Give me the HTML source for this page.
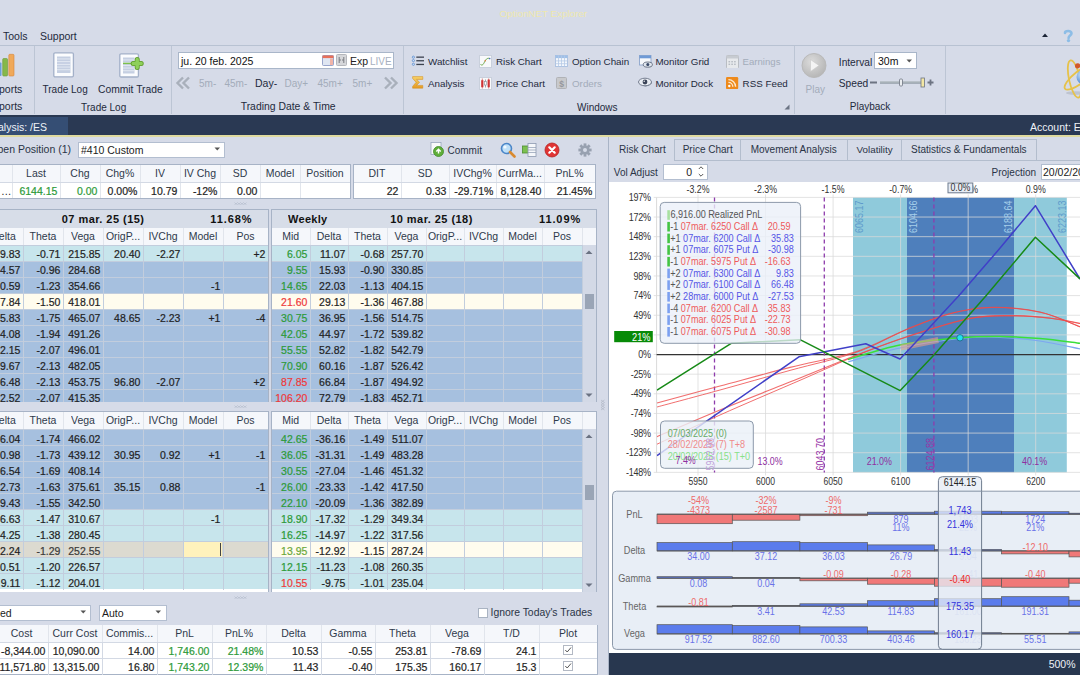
<!DOCTYPE html><html><head><meta charset="utf-8"><style>
html,body{margin:0;padding:0;}
body{width:1080px;height:675px;overflow:hidden;position:relative;background:#D6DBE8;font-family:"Liberation Sans", sans-serif;}
.t{position:absolute;white-space:nowrap;}
.s{-webkit-text-stroke:0.2px currentColor;}
.r{position:absolute;box-sizing:border-box;}
svg{position:absolute;}
</style></head><body>
<div class="t" style="top:8.53px;font-size:9.8px;line-height:10.947px;color:#EEE8AE;left:499.50px;">OptionNET Explorer</div>
<div class="t" style="top:31.30px;font-size:10.5px;line-height:11.729px;color:#1e2a3c;left:3.00px;">Tools</div>
<div class="t" style="top:31.30px;font-size:10.5px;line-height:11.729px;color:#1e2a3c;left:40.00px;">Support</div>
<svg style="left:1040px;top:31px" width="10" height="8"><path d="M2 6 L5 2.5 L8 6 Z" fill="#1b2436"/></svg>
<svg style="left:1061px;top:28px" width="14" height="16"><path d="M4 5 C4 2.5 10.5 2.2 10.5 5.2 C10.5 7.4 7.6 7.6 7.6 10" stroke="#8dbde6" stroke-width="2.6" fill="none" stroke-linecap="round"/><circle cx="7.5" cy="12.6" r="1.7" fill="#8dbde6"/></svg>
<div class="r" style="left:0px;top:45px;width:1080px;height:1px;background:#B8C2D2;"></div>
<div class="r" style="left:34px;top:46px;width:1px;height:68px;background:#BCC5D4;"></div>
<div class="r" style="left:171px;top:46px;width:1px;height:68px;background:#BCC5D4;"></div>
<div class="r" style="left:403px;top:46px;width:1px;height:68px;background:#BCC5D4;"></div>
<div class="r" style="left:794px;top:46px;width:1px;height:68px;background:#BCC5D4;"></div>
<div class="r" style="left:945px;top:46px;width:1px;height:68px;background:#BCC5D4;"></div>
<svg style="left:0px;top:52px" width="16" height="26"><rect x="-2" y="10.5" width="3.5" height="13.5" rx="1" fill="#6aa0d8"/><rect x="2.7" y="6.5" width="4.8" height="17.5" rx="1" fill="#86b84a" stroke="#6c9a36" stroke-width="0.6"/><rect x="8.8" y="2.3" width="5.2" height="21.7" rx="1" fill="#f0a95a" stroke="#d7863b" stroke-width="0.6"/></svg>
<div class="t" style="top:83.50px;font-size:10.5px;line-height:11.729px;color:#1e2a3c;left:-1.00px;">ports</div>
<div class="t" style="top:101.10px;font-size:10.5px;line-height:11.729px;color:#1e2a3c;left:-1.00px;">ports</div>
<svg style="left:53px;top:52px" width="22" height="26"><rect x="0.8" y="0.8" width="19.6" height="24" fill="#fbfcfe" stroke="#a3b0c8" stroke-width="1.3" rx="1.2"/><rect x="4" y="4.5" width="13.5" height="16.5" fill="#c5cfe2"/><rect x="4" y="6.5" width="13.5" height="0.9" fill="#e6ebf4"/><rect x="4" y="9.2" width="13.5" height="0.9" fill="#e6ebf4"/><rect x="4" y="11.9" width="13.5" height="0.9" fill="#e6ebf4"/><rect x="4" y="14.6" width="13.5" height="0.9" fill="#e6ebf4"/><rect x="4" y="17.3" width="13.5" height="0.9" fill="#e6ebf4"/></svg>
<svg style="left:119px;top:52.5px" width="28" height="26"><rect x="0.8" y="0.8" width="18.6" height="23.2" fill="#fbfcfe" stroke="#a3b0c8" stroke-width="1.3" rx="1.2"/><rect x="4" y="4.5" width="11.5" height="16" fill="#c5cfe2"/><rect x="4" y="6.5" width="11.5" height="0.9" fill="#e6ebf4"/><rect x="4" y="9.2" width="11.5" height="0.9" fill="#e6ebf4"/><rect x="4" y="11.9" width="11.5" height="0.9" fill="#e6ebf4"/><rect x="4" y="14.6" width="11.5" height="0.9" fill="#e6ebf4"/><rect x="4" y="17.3" width="11.5" height="0.9" fill="#e6ebf4"/><rect x="4" y="9.7" width="9" height="1.4" fill="#7cc04a"/><path d="M18.2 6.5 v8 M14.2 10.5 h8" stroke="#5e9a2a" stroke-width="5" stroke-linecap="round"/><path d="M18.2 6.5 v8 M14.2 10.5 h8" stroke="#8ed05a" stroke-width="3.4" stroke-linecap="round"/></svg>
<div class="t" style="top:84.25px;font-size:10px;line-height:11.170px;color:#1e2a3c;left:42.50px;">Trade Log</div>
<div class="t" style="top:83.98px;font-size:10.3px;line-height:11.505px;color:#1e2a3c;left:98.00px;">Commit Trade</div>
<div class="t" style="top:101.75px;font-size:10px;line-height:11.170px;color:#1e2a3c;left:81.00px;">Trade Log</div>
<div class="r" style="left:178px;top:52px;width:216px;height:17px;background:#fff;border:1px solid #A9B6C9;"></div>
<div class="t" style="top:55.80px;font-size:10.5px;line-height:11.729px;color:#111;left:181.00px;">ju. 20 feb. 2025</div>
<svg style="left:321.5px;top:54.5px" width="12" height="11"><rect x="0.5" y="0.5" width="11" height="10" rx="1" fill="#dfe6f2" stroke="#8d9cc6" stroke-width="0.9"/><rect x="0.5" y="0.5" width="11" height="2.6" fill="#e8705a"/><rect x="8" y="3.5" width="3" height="6.5" fill="#f0b4a8"/></svg>
<svg style="left:336px;top:54px" width="11" height="12"><rect x="0.5" y="0.5" width="10" height="11" rx="1" fill="#d6d7da" stroke="#b5b7bc"/><path d="M3.2 3v6 M7.8 3v6 M3.2 6h1.8 M7.8 6h-1.8" stroke="#7a7c82" stroke-width="1"/></svg>
<div class="t" style="top:55.80px;font-size:10.5px;line-height:11.729px;color:#222;left:350.00px;">Exp</div>
<div class="t" style="top:56.25px;font-size:10px;line-height:11.170px;color:#a7b0bf;left:370.00px;">LIVE</div>
<svg style="left:175px;top:76px" width="18" height="14"><path d="M8 1.5 L2.5 7 L8 12.5 M14 1.5 L8.5 7 L14 12.5" stroke="#a9b0bb" stroke-width="2.4" fill="none"/></svg>
<svg style="left:381px;top:76px" width="18" height="14"><path d="M4 1.5 L9.5 7 L4 12.5 M10 1.5 L15.5 7 L10 12.5" stroke="#a9b0bb" stroke-width="2.4" fill="none"/></svg>
<div class="t" style="top:78.25px;font-size:10px;line-height:11.170px;color:#a3acba;left:199.00px;">5m-</div>
<div class="t" style="top:78.25px;font-size:10px;line-height:11.170px;color:#a3acba;left:224.50px;">45m-</div>
<div class="t" style="top:77.80px;font-size:10.5px;line-height:11.729px;color:#1e2a3c;left:255.00px;">Day-</div>
<div class="t" style="top:78.25px;font-size:10px;line-height:11.170px;color:#a3acba;left:284.50px;">Day+</div>
<div class="t" style="top:78.25px;font-size:10px;line-height:11.170px;color:#a3acba;left:317.50px;">45m+</div>
<div class="t" style="top:78.25px;font-size:10px;line-height:11.170px;color:#a3acba;left:352.50px;">5m+</div>
<div class="t" style="top:100.89px;font-size:10.4px;line-height:11.617px;color:#1e2a3c;left:240.70px;">Trading Date &amp; Time</div>
<svg style="left:411px;top:55px" width="14" height="12"><circle cx="2.4" cy="2.2" r="1.1" fill="#cfe0f4" stroke="#5d8ed0" stroke-width="0.8"/><circle cx="2.4" cy="5.6" r="1.1" fill="#cfe0f4" stroke="#5d8ed0" stroke-width="0.8"/><circle cx="2.4" cy="9.3" r="1.1" fill="#cfe0f4" stroke="#5d8ed0" stroke-width="0.8"/><rect x="5.3" y="1.5" width="7.7" height="1.3" fill="#3c4350"/><rect x="5.3" y="5.1" width="7.7" height="1.3" fill="#3c4350"/><rect x="5.3" y="8.8" width="7.7" height="1.3" fill="#3c4350"/></svg>
<div class="t" style="top:56.93px;font-size:9.8px;line-height:10.947px;color:#1e2a3c;left:428.00px;">Watchlist</div>
<svg style="left:412px;top:76px" width="12" height="13"><defs><linearGradient id="sg" x1="0" y1="0" x2="0" y2="1"><stop offset="0" stop-color="#f7d36a"/><stop offset="1" stop-color="#e59a22"/></linearGradient></defs><path d="M0.6 0.6 H10.8 V3.4 H4.6 L7.6 6.3 L4.6 9.4 H10.8 V12.2 H0.6 V10.4 L4.1 6.3 L0.6 2.4 Z" fill="url(#sg)" stroke="#d08a1a" stroke-width="0.5"/></svg>
<div class="t" style="top:78.93px;font-size:9.8px;line-height:10.947px;color:#1e2a3c;left:428.00px;">Analysis</div>
<svg style="left:478.5px;top:54.5px" width="13" height="13"><rect x="0.5" y="0.5" width="12" height="12" fill="#f8f9fb" stroke="#c9d0dc"/><path d="M1.5 9.5 C3.5 11 4.5 9 5.5 7 S8 2.5 10.5 3.5" stroke="#6aa84a" stroke-width="1" fill="none"/><circle cx="6.3" cy="5.8" r="0.8" fill="#e0783a"/><circle cx="10.7" cy="3.6" r="0.8" fill="#4a70c8"/></svg>
<div class="t" style="top:56.93px;font-size:9.8px;line-height:10.947px;color:#1e2a3c;left:496.00px;">Risk Chart</div>
<svg style="left:478.5px;top:76.5px" width="13" height="13"><rect x="0.5" y="0.5" width="12" height="12" fill="#f8f9fb" stroke="#c9d0dc"/><rect x="2.2" y="3.2" width="2.2" height="7" fill="#d83a3a"/><rect x="8.6" y="2.6" width="2.2" height="7.6" fill="#d83a3a"/><path d="M3.3 1.5v10 M9.7 1.5v10" stroke="#c03030" stroke-width="0.6"/><path d="M6.5 2.5v8" stroke="#8a8f98" stroke-width="0.8"/><rect x="5.6" y="4.5" width="1.8" height="3.5" fill="#fff" stroke="#8a8f98" stroke-width="0.6"/></svg>
<div class="t" style="top:78.93px;font-size:9.8px;line-height:10.947px;color:#1e2a3c;left:496.00px;">Price Chart</div>
<svg style="left:554.5px;top:55px" width="13" height="12"><rect x="0.5" y="0.5" width="12" height="11" fill="#f4f7fc" stroke="#a9bfdf" stroke-width="0.9"/><rect x="0.5" y="0.5" width="12" height="2.6" fill="#9fc0e8"/><path d="M3.5 0.5v11" stroke="#b5c9e6" stroke-width="0.8"/><path d="M6.5 0.5v11" stroke="#b5c9e6" stroke-width="0.8"/><path d="M9.5 0.5v11" stroke="#b5c9e6" stroke-width="0.8"/><path d="M0.5 5.90h12" stroke="#b5c9e6" stroke-width="0.8"/><path d="M0.5 8.70h12" stroke="#b5c9e6" stroke-width="0.8"/></svg>
<div class="t" style="top:56.93px;font-size:9.8px;line-height:10.947px;color:#1e2a3c;left:572.00px;">Option Chain</div>
<svg style="left:555.5px;top:77px" width="11" height="12"><rect x="0.5" y="0.5" width="10" height="11" rx="1" fill="#c8c9cc" stroke="#b0b2b6"/><text x="5.5" y="9.5" font-size="8.5" font-weight="bold" text-anchor="middle" fill="#95979c" font-family="Liberation Sans">$</text></svg>
<div class="t" style="top:78.93px;font-size:9.8px;line-height:10.947px;color:#a3acba;left:572.00px;">Orders</div>
<svg style="left:638.5px;top:55px" width="14" height="13"><rect x="0.5" y="0.5" width="11.5" height="9.5" fill="#f6f8fb" stroke="#8ea6cc" stroke-width="0.9"/><rect x="0.5" y="0.5" width="11.5" height="2.8" fill="#6f9ad6"/><ellipse cx="8.8" cy="9.6" rx="4.6" ry="2.6" fill="#dfe5ee" stroke="#4f596c" stroke-width="0.8"/><circle cx="8.8" cy="9.6" r="1.5" fill="#3a4a68"/></svg>
<svg style="left:638.5px;top:78px" width="14" height="10"><path d="M0.8 5 Q6.5 -1 12.8 5 Q6.5 11 0.8 5 Z" fill="#e9edf3" stroke="#6a7384" stroke-width="0.8"/><path d="M1.5 4 Q6.5 -0.5 12 4" stroke="#e0a050" stroke-width="1" fill="none"/><circle cx="6.8" cy="5" r="2.5" fill="#5a7fae"/><circle cx="6.8" cy="5" r="1.2" fill="#1e2a40"/></svg>
<div class="t" style="top:56.93px;font-size:9.8px;line-height:10.947px;color:#1e2a3c;left:655.40px;">Monitor Grid</div>
<svg style="left:638px;top:77px" width="15" height="10"><ellipse cx="7" cy="5" rx="6.5" ry="3.8" fill="#e8ecf2" stroke="#6a7384" stroke-width="0.9"/><circle cx="7" cy="5" r="2.4" fill="#3b4458"/><circle cx="6.2" cy="4.2" r="0.7" fill="#fff"/></svg>
<div class="t" style="top:78.93px;font-size:9.8px;line-height:10.947px;color:#1e2a3c;left:655.40px;">Monitor Dock</div>
<svg style="left:726px;top:54.5px" width="13" height="13"><rect x="0.5" y="0.5" width="12" height="13" rx="1" fill="#e7e9ec" stroke="#b9bdc3"/><rect x="0.5" y="0.5" width="12" height="3" fill="#c7cbd1"/><rect x="2.5" y="6.0" width="1.6" height="1.4" fill="#b7bcc4"/><rect x="2.5" y="8.6" width="1.6" height="1.4" fill="#b7bcc4"/><rect x="5.3" y="6.0" width="1.6" height="1.4" fill="#b7bcc4"/><rect x="5.3" y="8.6" width="1.6" height="1.4" fill="#b7bcc4"/><rect x="8.1" y="6.0" width="1.6" height="1.4" fill="#b7bcc4"/><rect x="8.1" y="8.6" width="1.6" height="1.4" fill="#b7bcc4"/></svg>
<div class="t" style="top:57.11px;font-size:9.6px;line-height:10.723px;color:#a3acba;left:742.60px;">Earnings</div>
<svg style="left:726px;top:76.8px" width="12.5" height="12.5"><rect x="0" y="0" width="12.2" height="12.2" rx="1.2" fill="#ee8a1c"/><circle cx="3.3" cy="9" r="1.2" fill="#fff"/><path d="M2.4 5.4 A4.4 4.4 0 0 1 6.8 9.8 M2.4 2.6 A7.2 7.2 0 0 1 9.6 9.8" stroke="#fde8cc" stroke-width="1.4" fill="none"/></svg>
<div class="t" style="top:78.93px;font-size:9.8px;line-height:10.947px;color:#1e2a3c;left:742.60px;">RSS Feed</div>
<div class="t" style="top:101.75px;font-size:10px;line-height:11.170px;color:#1e2a3c;left:577.00px;">Windows</div>
<svg style="left:784px;top:104px" width="6" height="6"><path d="M5.5 0.5 V5.5 H0.5 Z" fill="#6c7584"/></svg>
<svg style="left:800px;top:52px" width="28" height="28"><defs><radialGradient id="pg" cx="0.4" cy="0.35" r="0.7"><stop offset="0" stop-color="#dcdcdc"/><stop offset="1" stop-color="#b4b4b4"/></radialGradient></defs><circle cx="14" cy="13.5" r="12" fill="url(#pg)" stroke="#b9b9b9"/><path d="M10.5 7.5 L19 13.5 L10.5 19.5 Z" fill="#f4f4f4" stroke="#c8c8c8" stroke-width="0.6"/></svg>
<div class="t" style="top:83.75px;font-size:10px;line-height:11.170px;color:#a3acba;left:805.50px;">Play</div>
<div class="t" style="top:56.57px;font-size:10.2px;line-height:11.393px;color:#1e2a3c;left:838.80px;">Interval</div>
<div class="r" style="left:874px;top:52px;width:43px;height:17px;background:#fff;border:1px solid #A9B6C9;"></div>
<div class="t" style="top:56.30px;font-size:10.5px;line-height:11.729px;color:#111;left:878.00px;">30m</div>
<svg style="left:906px;top:58.5px" width="7" height="5"><path d="M0.5 0.5 H6 L3.25 3.5 Z" fill="#555"/></svg>
<div class="t" style="top:78.07px;font-size:10.2px;line-height:11.393px;color:#1e2a3c;left:838.80px;">Speed</div>
<svg style="left:868px;top:77px" width="70" height="11"><rect x="2" y="4.5" width="7" height="2" fill="#6d7482"/><rect x="12" y="4.5" width="44" height="2.2" fill="#8f9aa4"/><rect x="12" y="4.5" width="44" height="1" fill="#c0c8cc"/><rect x="31.5" y="2" width="3" height="7" rx="1" fill="#e9ecef" stroke="#6d7482" stroke-width="0.8"/><rect x="53" y="1" width="3.5" height="9" fill="#f3e7a4" stroke="#6d7482" stroke-width="0.8"/><path d="M59.5 5.5h6 M62.5 2.5v6" stroke="#6d7482" stroke-width="1.8"/></svg>
<div class="t" style="top:101.35px;font-size:10px;line-height:11.170px;color:#1e2a3c;left:849.80px;">Playback</div>
<svg style="left:1058px;top:55px" width="22" height="48"><defs><radialGradient id="ab" cx="0.35" cy="0.35" r="0.7"><stop offset="0" stop-color="#cfe6fb"/><stop offset="1" stop-color="#3a7cd0"/></radialGradient></defs><ellipse cx="17" cy="38" rx="9" ry="1.8" fill="#aeb4c0" opacity="0.6"/><ellipse cx="16.5" cy="24" rx="5.5" ry="19" transform="rotate(-12 16.5 24)" fill="none" stroke="#e6c24a" stroke-width="1.8"/><ellipse cx="22" cy="22" rx="19" ry="6" transform="rotate(-38 22 22)" fill="none" stroke="#e6c24a" stroke-width="1.8"/><circle cx="26" cy="22" r="7.5" fill="url(#ab)"/><circle cx="19.6" cy="10.8" r="2.6" fill="#d2582a"/></svg>
<div class="r" style="left:0px;top:115px;width:1080px;height:20px;background:#2A3953;"></div>
<div class="r" style="left:0px;top:117px;width:68px;height:18px;background:#354E74;"></div>
<div class="t" style="top:121.50px;font-size:10.5px;line-height:11.729px;color:#eef2f8;left:-2.00px;">alysis: /ES</div>
<div class="t" style="top:121.50px;font-size:10.5px;line-height:11.729px;color:#eef2f8;left:1030.00px;">Account: E</div>
<div class="r" style="left:0px;top:135px;width:1080px;height:2px;background:#DFDA9F;"></div>
<div class="t" style="top:144.10px;font-size:10.5px;line-height:11.729px;color:#2a3446;left:-49.00px;width:120px;text-align:right;">Open Position (1)</div>
<div class="r" style="left:78px;top:142px;width:147px;height:16px;background:#fff;border:1px solid #B3BED0;"></div>
<div class="t" style="top:144.80px;font-size:10.5px;line-height:11.729px;color:#1b1b1b;left:81.00px;">#410 Custom</div>
<svg style="left:214px;top:147px" width="7" height="5"><path d="M0.5 0.5 H6 L3.25 3.5 Z" fill="#555"/></svg>
<svg style="left:430px;top:142px" width="15" height="15"><rect x="1" y="0.5" width="10" height="12" fill="#f8f9fb" stroke="#9aa7bd" stroke-width="0.8"/><circle cx="8.5" cy="9.5" r="5" fill="#5fae3a" stroke="#3e8a26" stroke-width="0.8"/><path d="M6.3 9.5 L8.5 7.3 L10.7 9.5 M8.5 7.5 v4" stroke="#fff" stroke-width="1.4" fill="none"/></svg>
<div class="t" style="top:145.25px;font-size:10px;line-height:11.170px;color:#2a3446;left:447.50px;">Commit</div>
<svg style="left:500px;top:142px" width="16" height="16"><circle cx="6.5" cy="6.5" r="5" fill="#bfe0f8" stroke="#4b86c8" stroke-width="1.6"/><circle cx="5" cy="5" r="1.6" fill="#fff" opacity="0.8"/><path d="M10 10 L14.5 14.5" stroke="#d98a30" stroke-width="2.6" stroke-linecap="round"/></svg>
<svg style="left:522px;top:143px" width="15" height="14"><rect x="0.5" y="3" width="6" height="7" fill="#7cc050" stroke="#4d8f2e" stroke-width="0.8"/><rect x="6" y="0.5" width="8" height="13" fill="#f5f7fa" stroke="#8d9ab0" stroke-width="0.8"/><path d="M6 4.5h8 M6 7h8 M6 9.5h8" stroke="#8d9ab0" stroke-width="0.7"/></svg>
<svg style="left:544px;top:142px" width="16" height="16"><circle cx="8" cy="8" r="7" fill="#e03434" stroke="#b52222" stroke-width="0.8"/><path d="M5.3 5.3 L10.7 10.7 M10.7 5.3 L5.3 10.7" stroke="#fff" stroke-width="2.2" stroke-linecap="round"/></svg>
<svg style="left:578px;top:143px" width="14" height="14"><g transform="translate(7 7)"><rect x="-1.4" y="-6.6" width="2.8" height="3" fill="#98a1b0" transform="rotate(0)"/><rect x="-1.4" y="-6.6" width="2.8" height="3" fill="#98a1b0" transform="rotate(45)"/><rect x="-1.4" y="-6.6" width="2.8" height="3" fill="#98a1b0" transform="rotate(90)"/><rect x="-1.4" y="-6.6" width="2.8" height="3" fill="#98a1b0" transform="rotate(135)"/><rect x="-1.4" y="-6.6" width="2.8" height="3" fill="#98a1b0" transform="rotate(180)"/><rect x="-1.4" y="-6.6" width="2.8" height="3" fill="#98a1b0" transform="rotate(225)"/><rect x="-1.4" y="-6.6" width="2.8" height="3" fill="#98a1b0" transform="rotate(270)"/><rect x="-1.4" y="-6.6" width="2.8" height="3" fill="#98a1b0" transform="rotate(315)"/><circle r="4.6" fill="#98a1b0"/><circle r="2" fill="#d6dbe8"/></g></svg>
<div class="r" style="left:-1px;top:164px;width:352px;height:35px;background:#fff;border:1px solid #A7B3C6;"></div>
<div class="r" style="left:0px;top:165px;width:350px;height:17px;background:#F5F7FB;"></div>
<div class="t" style="top:168.00px;font-size:10.5px;line-height:11.729px;color:#2f3a4c;left:2.00px;width:68px;text-align:center;transform:scaleY(1.1);transform-origin:0 9.50px;">Last</div>
<div class="t" style="top:168.00px;font-size:10.5px;line-height:11.729px;color:#2f3a4c;left:50.00px;width:60px;text-align:center;transform:scaleY(1.1);transform-origin:0 9.50px;">Chg</div>
<div class="t" style="top:168.00px;font-size:10.5px;line-height:11.729px;color:#2f3a4c;left:90.00px;width:60px;text-align:center;transform:scaleY(1.1);transform-origin:0 9.50px;">Chg%</div>
<div class="t" style="top:168.00px;font-size:10.5px;line-height:11.729px;color:#2f3a4c;left:130.00px;width:60px;text-align:center;transform:scaleY(1.1);transform-origin:0 9.50px;">IV</div>
<div class="t" style="top:168.00px;font-size:10.5px;line-height:11.729px;color:#2f3a4c;left:170.00px;width:60px;text-align:center;transform:scaleY(1.1);transform-origin:0 9.50px;">IV Chg</div>
<div class="t" style="top:168.00px;font-size:10.5px;line-height:11.729px;color:#2f3a4c;left:210.00px;width:60px;text-align:center;transform:scaleY(1.1);transform-origin:0 9.50px;">SD</div>
<div class="t" style="top:168.00px;font-size:10.5px;line-height:11.729px;color:#2f3a4c;left:250.00px;width:60px;text-align:center;transform:scaleY(1.1);transform-origin:0 9.50px;">Model</div>
<div class="t" style="top:168.00px;font-size:10.5px;line-height:11.729px;color:#2f3a4c;left:290.00px;width:70px;text-align:center;transform:scaleY(1.1);transform-origin:0 9.50px;">Position</div>
<div class="r" style="left:12px;top:165px;width:1px;height:17px;background:#E1E5EC;"></div>
<div class="r" style="left:60px;top:165px;width:1px;height:17px;background:#E1E5EC;"></div>
<div class="r" style="left:100px;top:165px;width:1px;height:17px;background:#E1E5EC;"></div>
<div class="r" style="left:140px;top:165px;width:1px;height:17px;background:#E1E5EC;"></div>
<div class="r" style="left:180px;top:165px;width:1px;height:17px;background:#E1E5EC;"></div>
<div class="r" style="left:220px;top:165px;width:1px;height:17px;background:#E1E5EC;"></div>
<div class="r" style="left:260px;top:165px;width:1px;height:17px;background:#E1E5EC;"></div>
<div class="r" style="left:300px;top:165px;width:1px;height:17px;background:#E1E5EC;"></div>
<div class="r" style="left:0px;top:182px;width:350px;height:1px;background:#D3D9E4;"></div>
<div class="r" style="left:12px;top:183px;width:1px;height:15px;background:#E1E5EC;"></div>
<div class="r" style="left:60px;top:183px;width:1px;height:15px;background:#E1E5EC;"></div>
<div class="r" style="left:100px;top:183px;width:1px;height:15px;background:#E1E5EC;"></div>
<div class="r" style="left:140px;top:183px;width:1px;height:15px;background:#E1E5EC;"></div>
<div class="r" style="left:180px;top:183px;width:1px;height:15px;background:#E1E5EC;"></div>
<div class="r" style="left:220px;top:183px;width:1px;height:15px;background:#E1E5EC;"></div>
<div class="r" style="left:260px;top:183px;width:1px;height:15px;background:#E1E5EC;"></div>
<div class="r" style="left:300px;top:183px;width:1px;height:15px;background:#E1E5EC;"></div>
<div class="t" style="top:185.70px;font-size:10.5px;line-height:11.729px;color:#1f1f24;left:1.00px;">…</div>
<div class="t s" style="top:186.30px;font-size:10.5px;line-height:11.729px;color:#2c9a38;left:-42.60px;width:100px;text-align:right;transform:scaleY(1.12);transform-origin:0 9.50px;">6144.15</div>
<div class="t s" style="top:186.30px;font-size:10.5px;line-height:11.729px;color:#2c9a38;left:-2.60px;width:100px;text-align:right;transform:scaleY(1.12);transform-origin:0 9.50px;">0.00</div>
<div class="t s" style="top:186.30px;font-size:10.5px;line-height:11.729px;color:#1f1f24;left:37.40px;width:100px;text-align:right;transform:scaleY(1.12);transform-origin:0 9.50px;">0.00%</div>
<div class="t s" style="top:186.30px;font-size:10.5px;line-height:11.729px;color:#1f1f24;left:77.40px;width:100px;text-align:right;transform:scaleY(1.12);transform-origin:0 9.50px;">10.79</div>
<div class="t s" style="top:186.30px;font-size:10.5px;line-height:11.729px;color:#1f1f24;left:117.40px;width:100px;text-align:right;transform:scaleY(1.12);transform-origin:0 9.50px;">-12%</div>
<div class="t s" style="top:186.30px;font-size:10.5px;line-height:11.729px;color:#1f1f24;left:157.40px;width:100px;text-align:right;transform:scaleY(1.12);transform-origin:0 9.50px;">0.00</div>
<div class="r" style="left:353px;top:164px;width:243px;height:35px;background:#fff;border:1px solid #A7B3C6;"></div>
<div class="r" style="left:354px;top:165px;width:241px;height:17px;background:#F5F7FB;"></div>
<div class="t" style="top:168.00px;font-size:10.5px;line-height:11.729px;color:#2f3a4c;left:343.00px;width:68px;text-align:center;transform:scaleY(1.1);transform-origin:0 9.50px;">DIT</div>
<div class="t" style="top:168.00px;font-size:10.5px;line-height:11.729px;color:#2f3a4c;left:391.00px;width:68px;text-align:center;transform:scaleY(1.1);transform-origin:0 9.50px;">SD</div>
<div class="t" style="top:168.00px;font-size:10.5px;line-height:11.729px;color:#2f3a4c;left:439.00px;width:67px;text-align:center;transform:scaleY(1.1);transform-origin:0 9.50px;">IVChg%</div>
<div class="t" style="top:168.00px;font-size:10.5px;line-height:11.729px;color:#2f3a4c;left:486.00px;width:68px;text-align:center;transform:scaleY(1.1);transform-origin:0 9.50px;">CurrMa...</div>
<div class="t" style="top:168.00px;font-size:10.5px;line-height:11.729px;color:#2f3a4c;left:534.00px;width:71px;text-align:center;transform:scaleY(1.1);transform-origin:0 9.50px;">PnL%</div>
<div class="r" style="left:401px;top:165px;width:1px;height:17px;background:#E1E5EC;"></div>
<div class="r" style="left:449px;top:165px;width:1px;height:17px;background:#E1E5EC;"></div>
<div class="r" style="left:496px;top:165px;width:1px;height:17px;background:#E1E5EC;"></div>
<div class="r" style="left:544px;top:165px;width:1px;height:17px;background:#E1E5EC;"></div>
<div class="r" style="left:354px;top:182px;width:241px;height:1px;background:#D3D9E4;"></div>
<div class="r" style="left:401px;top:183px;width:1px;height:15px;background:#E1E5EC;"></div>
<div class="r" style="left:449px;top:183px;width:1px;height:15px;background:#E1E5EC;"></div>
<div class="r" style="left:496px;top:183px;width:1px;height:15px;background:#E1E5EC;"></div>
<div class="r" style="left:544px;top:183px;width:1px;height:15px;background:#E1E5EC;"></div>
<div class="t s" style="top:186.30px;font-size:10.5px;line-height:11.729px;color:#1f1f24;left:298.40px;width:100px;text-align:right;transform:scaleY(1.12);transform-origin:0 9.50px;">22</div>
<div class="t s" style="top:186.30px;font-size:10.5px;line-height:11.729px;color:#1f1f24;left:346.40px;width:100px;text-align:right;transform:scaleY(1.12);transform-origin:0 9.50px;">0.33</div>
<div class="t s" style="top:186.30px;font-size:10.5px;line-height:11.729px;color:#1f1f24;left:393.40px;width:100px;text-align:right;transform:scaleY(1.12);transform-origin:0 9.50px;">-29.71%</div>
<div class="t s" style="top:186.30px;font-size:10.5px;line-height:11.729px;color:#1f1f24;left:441.40px;width:100px;text-align:right;transform:scaleY(1.12);transform-origin:0 9.50px;">8,128.40</div>
<div class="t s" style="top:186.30px;font-size:10.5px;line-height:11.729px;color:#1f1f24;left:492.40px;width:100px;text-align:right;transform:scaleY(1.12);transform-origin:0 9.50px;">21.45%</div>
<svg style="left:234px;top:202px" width="14" height="4"><path d="M0.5 0.5 L2 2 L3.5 0.5 L5 2 L6.5 0.5 L8 2 L9.5 0.5 L11 2 L12.5 0.5 M0.5 3 L2 1.5 L3.5 3 L5 1.5 L6.5 3 L8 1.5 L9.5 3 L11 1.5 L12.5 3" stroke="#b4bccb" stroke-width="0.6" fill="none"/></svg>
<div class="r" style="left:-1px;top:208.5px;width:270px;height:193.5px;border:1px solid #A7B3C6;background:#fff;"></div>
<div class="r" style="left:271px;top:208.5px;width:326px;height:193.5px;border:1px solid #A7B3C6;background:#fff;"></div>
<div class="r" style="left:0px;top:209.5px;width:268px;height:18px;background:#D7DDE8;"></div>
<div class="r" style="left:272px;top:209.5px;width:324px;height:18px;background:#D7DDE8;"></div>
<div class="t" style="top:213.04px;font-size:11px;line-height:12.287px;color:#111;font-weight:bold;left:61.80px;transform:scaleY(1.05);transform-origin:0 9.96px;letter-spacing:0.45px;">07 mar. 25 (15)</div>
<div class="t" style="top:213.04px;font-size:11px;line-height:12.287px;color:#111;font-weight:bold;left:172.40px;width:80px;text-align:right;transform:scaleY(1.05);transform-origin:0 9.96px;letter-spacing:0.9px;">11.68%</div>
<div class="t" style="top:213.04px;font-size:11px;line-height:12.287px;color:#111;font-weight:bold;left:288.00px;transform:scaleY(1.05);transform-origin:0 9.96px;letter-spacing:0.3px;">Weekly</div>
<div class="t" style="top:213.04px;font-size:11px;line-height:12.287px;color:#111;font-weight:bold;left:390.20px;transform:scaleY(1.05);transform-origin:0 9.96px;letter-spacing:0.45px;">10 mar. 25 (18)</div>
<div class="t" style="top:213.04px;font-size:11px;line-height:12.287px;color:#111;font-weight:bold;left:501.10px;width:80px;text-align:right;transform:scaleY(1.05);transform-origin:0 9.96px;letter-spacing:0.9px;">11.09%</div>
<div class="r" style="left:0px;top:227.5px;width:268px;height:1px;background:#C3CCDA;"></div>
<div class="r" style="left:272px;top:227.5px;width:324px;height:1px;background:#C3CCDA;"></div>
<div class="r" style="left:0px;top:227.5px;width:268px;height:17.0px;background:#F5F7FB;"></div>
<div class="t" style="top:230.50px;font-size:10.5px;line-height:11.729px;color:#2f3a4c;left:-26.00px;width:59px;text-align:center;transform:scaleY(1.1);transform-origin:0 9.50px;">Delta</div>
<div class="t" style="top:230.50px;font-size:10.5px;line-height:11.729px;color:#2f3a4c;left:13.00px;width:60px;text-align:center;transform:scaleY(1.1);transform-origin:0 9.50px;">Theta</div>
<div class="t" style="top:230.50px;font-size:10.5px;line-height:11.729px;color:#2f3a4c;left:53.00px;width:60px;text-align:center;transform:scaleY(1.1);transform-origin:0 9.50px;">Vega</div>
<div class="t" style="top:230.50px;font-size:10.5px;line-height:11.729px;color:#2f3a4c;left:93.00px;width:60px;text-align:center;transform:scaleY(1.1);transform-origin:0 9.50px;">OrigP...</div>
<div class="t" style="top:230.50px;font-size:10.5px;line-height:11.729px;color:#2f3a4c;left:133.00px;width:60px;text-align:center;transform:scaleY(1.1);transform-origin:0 9.50px;">IVChg</div>
<div class="t" style="top:230.50px;font-size:10.5px;line-height:11.729px;color:#2f3a4c;left:173.00px;width:60px;text-align:center;transform:scaleY(1.1);transform-origin:0 9.50px;">Model</div>
<div class="t" style="top:230.50px;font-size:10.5px;line-height:11.729px;color:#2f3a4c;left:213.00px;width:65px;text-align:center;transform:scaleY(1.1);transform-origin:0 9.50px;">Pos</div>
<div class="r" style="left:23px;top:227.5px;width:1px;height:17.0px;background:#E1E5EC;"></div>
<div class="r" style="left:63px;top:227.5px;width:1px;height:17.0px;background:#E1E5EC;"></div>
<div class="r" style="left:103px;top:227.5px;width:1px;height:17.0px;background:#E1E5EC;"></div>
<div class="r" style="left:143px;top:227.5px;width:1px;height:17.0px;background:#E1E5EC;"></div>
<div class="r" style="left:183px;top:227.5px;width:1px;height:17.0px;background:#E1E5EC;"></div>
<div class="r" style="left:223px;top:227.5px;width:1px;height:17.0px;background:#E1E5EC;"></div>
<div class="r" style="left:272px;top:227.5px;width:324px;height:17.0px;background:#F5F7FB;"></div>
<div class="t" style="top:230.50px;font-size:10.5px;line-height:11.729px;color:#2f3a4c;left:261.40px;width:58.60000000000002px;text-align:center;transform:scaleY(1.1);transform-origin:0 9.50px;">Mid</div>
<div class="t" style="top:230.50px;font-size:10.5px;line-height:11.729px;color:#2f3a4c;left:300.00px;width:58px;text-align:center;transform:scaleY(1.1);transform-origin:0 9.50px;">Delta</div>
<div class="t" style="top:230.50px;font-size:10.5px;line-height:11.729px;color:#2f3a4c;left:338.00px;width:59px;text-align:center;transform:scaleY(1.1);transform-origin:0 9.50px;">Theta</div>
<div class="t" style="top:230.50px;font-size:10.5px;line-height:11.729px;color:#2f3a4c;left:377.00px;width:59px;text-align:center;transform:scaleY(1.1);transform-origin:0 9.50px;">Vega</div>
<div class="t" style="top:230.50px;font-size:10.5px;line-height:11.729px;color:#2f3a4c;left:416.00px;width:58px;text-align:center;transform:scaleY(1.1);transform-origin:0 9.50px;">OrigP...</div>
<div class="t" style="top:230.50px;font-size:10.5px;line-height:11.729px;color:#2f3a4c;left:454.00px;width:59px;text-align:center;transform:scaleY(1.1);transform-origin:0 9.50px;">IVChg</div>
<div class="t" style="top:230.50px;font-size:10.5px;line-height:11.729px;color:#2f3a4c;left:493.00px;width:59px;text-align:center;transform:scaleY(1.1);transform-origin:0 9.50px;">Model</div>
<div class="t" style="top:230.50px;font-size:10.5px;line-height:11.729px;color:#2f3a4c;left:532.00px;width:60px;text-align:center;transform:scaleY(1.1);transform-origin:0 9.50px;">Pos</div>
<div class="r" style="left:310px;top:227.5px;width:1px;height:17.0px;background:#E1E5EC;"></div>
<div class="r" style="left:348px;top:227.5px;width:1px;height:17.0px;background:#E1E5EC;"></div>
<div class="r" style="left:387px;top:227.5px;width:1px;height:17.0px;background:#E1E5EC;"></div>
<div class="r" style="left:426px;top:227.5px;width:1px;height:17.0px;background:#E1E5EC;"></div>
<div class="r" style="left:464px;top:227.5px;width:1px;height:17.0px;background:#E1E5EC;"></div>
<div class="r" style="left:503px;top:227.5px;width:1px;height:17.0px;background:#E1E5EC;"></div>
<div class="r" style="left:542px;top:227.5px;width:1px;height:17.0px;background:#E1E5EC;"></div>
<div class="r" style="left:582px;top:227.5px;width:1px;height:17.0px;background:#E1E5EC;"></div>
<div class="r" style="left:0px;top:244.5px;width:268px;height:16px;background:#C7E5EC;border-top:1px solid #C2CDDD;"></div>
<div class="r" style="left:272px;top:244.5px;width:310.2px;height:16px;background:#C7E5EC;border-top:1px solid #C2CDDD;"></div>
<div class="r" style="left:0px;top:260.5px;width:268px;height:16px;background:#A6C0DF;border-top:1px solid #C2CDDD;"></div>
<div class="r" style="left:272px;top:260.5px;width:310.2px;height:16px;background:#A6C0DF;border-top:1px solid #C2CDDD;"></div>
<div class="r" style="left:0px;top:276.5px;width:268px;height:16px;background:#A6C0DF;border-top:1px solid #C2CDDD;"></div>
<div class="r" style="left:272px;top:276.5px;width:310.2px;height:16px;background:#A6C0DF;border-top:1px solid #C2CDDD;"></div>
<div class="r" style="left:0px;top:292.5px;width:268px;height:16px;background:#FFFCEE;border-top:1px solid #C2CDDD;"></div>
<div class="r" style="left:272px;top:292.5px;width:310.2px;height:16px;background:#FFFCEE;border-top:1px solid #C2CDDD;"></div>
<div class="r" style="left:0px;top:308.5px;width:268px;height:16px;background:#A6C0DF;border-top:1px solid #C2CDDD;"></div>
<div class="r" style="left:272px;top:308.5px;width:310.2px;height:16px;background:#A6C0DF;border-top:1px solid #C2CDDD;"></div>
<div class="r" style="left:0px;top:324.5px;width:268px;height:16px;background:#A6C0DF;border-top:1px solid #C2CDDD;"></div>
<div class="r" style="left:272px;top:324.5px;width:310.2px;height:16px;background:#A6C0DF;border-top:1px solid #C2CDDD;"></div>
<div class="r" style="left:0px;top:340.5px;width:268px;height:16px;background:#A6C0DF;border-top:1px solid #C2CDDD;"></div>
<div class="r" style="left:272px;top:340.5px;width:310.2px;height:16px;background:#A6C0DF;border-top:1px solid #C2CDDD;"></div>
<div class="r" style="left:0px;top:356.5px;width:268px;height:16px;background:#A6C0DF;border-top:1px solid #C2CDDD;"></div>
<div class="r" style="left:272px;top:356.5px;width:310.2px;height:16px;background:#A6C0DF;border-top:1px solid #C2CDDD;"></div>
<div class="r" style="left:0px;top:372.5px;width:268px;height:16px;background:#A6C0DF;border-top:1px solid #C2CDDD;"></div>
<div class="r" style="left:272px;top:372.5px;width:310.2px;height:16px;background:#A6C0DF;border-top:1px solid #C2CDDD;"></div>
<div class="r" style="left:0px;top:388.5px;width:268px;height:13.5px;background:#A6C0DF;border-top:1px solid #C2CDDD;"></div>
<div class="r" style="left:272px;top:388.5px;width:310.2px;height:13.5px;background:#A6C0DF;border-top:1px solid #C2CDDD;"></div>
<div class="r" style="left:23px;top:244.5px;width:1px;height:157.5px;background:#C2CDDD;"></div>
<div class="r" style="left:63px;top:244.5px;width:1px;height:157.5px;background:#C2CDDD;"></div>
<div class="r" style="left:103px;top:244.5px;width:1px;height:157.5px;background:#C2CDDD;"></div>
<div class="r" style="left:143px;top:244.5px;width:1px;height:157.5px;background:#C2CDDD;"></div>
<div class="r" style="left:183px;top:244.5px;width:1px;height:157.5px;background:#C2CDDD;"></div>
<div class="r" style="left:223px;top:244.5px;width:1px;height:157.5px;background:#C2CDDD;"></div>
<div class="r" style="left:310px;top:244.5px;width:1px;height:157.5px;background:#C2CDDD;"></div>
<div class="r" style="left:348px;top:244.5px;width:1px;height:157.5px;background:#C2CDDD;"></div>
<div class="r" style="left:387px;top:244.5px;width:1px;height:157.5px;background:#C2CDDD;"></div>
<div class="r" style="left:426px;top:244.5px;width:1px;height:157.5px;background:#C2CDDD;"></div>
<div class="r" style="left:464px;top:244.5px;width:1px;height:157.5px;background:#C2CDDD;"></div>
<div class="r" style="left:503px;top:244.5px;width:1px;height:157.5px;background:#C2CDDD;"></div>
<div class="r" style="left:542px;top:244.5px;width:1px;height:157.5px;background:#C2CDDD;"></div>
<div class="r" style="left:582px;top:244.5px;width:1px;height:157.5px;background:#C2CDDD;"></div>
<div class="r" style="left:583px;top:244.5px;width:13px;height:157.5px;background:#D3D9E6;"></div>
<svg style="left:585px;top:249.5px" width="8" height="5"><path d="M0.5 4 L4 0.5 L7.5 4 Z" fill="#6a7282"/></svg>
<svg style="left:585px;top:393px" width="8" height="5"><path d="M0.5 0.5 L4 4 L7.5 0.5 Z" fill="#6a7282"/></svg>
<div class="r" style="left:584.5px;top:294px;width:9px;height:15px;background:#9AA5B6;"></div>
<div class="t s" style="top:248.80px;font-size:10.5px;line-height:11.729px;color:#1f1f24;left:-79.60px;width:100px;text-align:right;transform:scaleY(1.12);transform-origin:0 9.50px;">9.83</div>
<div class="t s" style="top:248.80px;font-size:10.5px;line-height:11.729px;color:#1f1f24;left:-39.60px;width:100px;text-align:right;transform:scaleY(1.12);transform-origin:0 9.50px;">-0.71</div>
<div class="t s" style="top:248.80px;font-size:10.5px;line-height:11.729px;color:#1f1f24;left:0.40px;width:100px;text-align:right;transform:scaleY(1.12);transform-origin:0 9.50px;">215.85</div>
<div class="t s" style="top:248.80px;font-size:10.5px;line-height:11.729px;color:#1f1f24;left:40.40px;width:100px;text-align:right;transform:scaleY(1.12);transform-origin:0 9.50px;">20.40</div>
<div class="t s" style="top:248.80px;font-size:10.5px;line-height:11.729px;color:#1f1f24;left:80.40px;width:100px;text-align:right;transform:scaleY(1.12);transform-origin:0 9.50px;">-2.27</div>
<div class="t s" style="top:248.80px;font-size:10.5px;line-height:11.729px;color:#1f1f24;left:165.40px;width:100px;text-align:right;transform:scaleY(1.12);transform-origin:0 9.50px;">+2</div>
<div class="t s" style="top:248.80px;font-size:10.5px;line-height:11.729px;color:#2c9a38;left:207.40px;width:100px;text-align:right;transform:scaleY(1.12);transform-origin:0 9.50px;">6.05</div>
<div class="t s" style="top:248.80px;font-size:10.5px;line-height:11.729px;color:#1f1f24;left:245.40px;width:100px;text-align:right;transform:scaleY(1.12);transform-origin:0 9.50px;">11.07</div>
<div class="t s" style="top:248.80px;font-size:10.5px;line-height:11.729px;color:#1f1f24;left:284.40px;width:100px;text-align:right;transform:scaleY(1.12);transform-origin:0 9.50px;">-0.68</div>
<div class="t s" style="top:248.80px;font-size:10.5px;line-height:11.729px;color:#1f1f24;left:323.40px;width:100px;text-align:right;transform:scaleY(1.12);transform-origin:0 9.50px;">257.70</div>
<div class="t s" style="top:264.80px;font-size:10.5px;line-height:11.729px;color:#1f1f24;left:-79.60px;width:100px;text-align:right;transform:scaleY(1.12);transform-origin:0 9.50px;">4.57</div>
<div class="t s" style="top:264.80px;font-size:10.5px;line-height:11.729px;color:#1f1f24;left:-39.60px;width:100px;text-align:right;transform:scaleY(1.12);transform-origin:0 9.50px;">-0.96</div>
<div class="t s" style="top:264.80px;font-size:10.5px;line-height:11.729px;color:#1f1f24;left:0.40px;width:100px;text-align:right;transform:scaleY(1.12);transform-origin:0 9.50px;">284.68</div>
<div class="t s" style="top:264.80px;font-size:10.5px;line-height:11.729px;color:#2c9a38;left:207.40px;width:100px;text-align:right;transform:scaleY(1.12);transform-origin:0 9.50px;">9.55</div>
<div class="t s" style="top:264.80px;font-size:10.5px;line-height:11.729px;color:#1f1f24;left:245.40px;width:100px;text-align:right;transform:scaleY(1.12);transform-origin:0 9.50px;">15.93</div>
<div class="t s" style="top:264.80px;font-size:10.5px;line-height:11.729px;color:#1f1f24;left:284.40px;width:100px;text-align:right;transform:scaleY(1.12);transform-origin:0 9.50px;">-0.90</div>
<div class="t s" style="top:264.80px;font-size:10.5px;line-height:11.729px;color:#1f1f24;left:323.40px;width:100px;text-align:right;transform:scaleY(1.12);transform-origin:0 9.50px;">330.85</div>
<div class="t s" style="top:280.80px;font-size:10.5px;line-height:11.729px;color:#1f1f24;left:-79.60px;width:100px;text-align:right;transform:scaleY(1.12);transform-origin:0 9.50px;">0.59</div>
<div class="t s" style="top:280.80px;font-size:10.5px;line-height:11.729px;color:#1f1f24;left:-39.60px;width:100px;text-align:right;transform:scaleY(1.12);transform-origin:0 9.50px;">-1.23</div>
<div class="t s" style="top:280.80px;font-size:10.5px;line-height:11.729px;color:#1f1f24;left:0.40px;width:100px;text-align:right;transform:scaleY(1.12);transform-origin:0 9.50px;">354.66</div>
<div class="t s" style="top:280.80px;font-size:10.5px;line-height:11.729px;color:#1f1f24;left:120.40px;width:100px;text-align:right;transform:scaleY(1.12);transform-origin:0 9.50px;">-1</div>
<div class="t s" style="top:280.80px;font-size:10.5px;line-height:11.729px;color:#2c9a38;left:207.40px;width:100px;text-align:right;transform:scaleY(1.12);transform-origin:0 9.50px;">14.65</div>
<div class="t s" style="top:280.80px;font-size:10.5px;line-height:11.729px;color:#1f1f24;left:245.40px;width:100px;text-align:right;transform:scaleY(1.12);transform-origin:0 9.50px;">22.03</div>
<div class="t s" style="top:280.80px;font-size:10.5px;line-height:11.729px;color:#1f1f24;left:284.40px;width:100px;text-align:right;transform:scaleY(1.12);transform-origin:0 9.50px;">-1.13</div>
<div class="t s" style="top:280.80px;font-size:10.5px;line-height:11.729px;color:#1f1f24;left:323.40px;width:100px;text-align:right;transform:scaleY(1.12);transform-origin:0 9.50px;">404.15</div>
<div class="t s" style="top:296.80px;font-size:10.5px;line-height:11.729px;color:#1f1f24;left:-79.60px;width:100px;text-align:right;transform:scaleY(1.12);transform-origin:0 9.50px;">7.84</div>
<div class="t s" style="top:296.80px;font-size:10.5px;line-height:11.729px;color:#1f1f24;left:-39.60px;width:100px;text-align:right;transform:scaleY(1.12);transform-origin:0 9.50px;">-1.50</div>
<div class="t s" style="top:296.80px;font-size:10.5px;line-height:11.729px;color:#1f1f24;left:0.40px;width:100px;text-align:right;transform:scaleY(1.12);transform-origin:0 9.50px;">418.01</div>
<div class="t s" style="top:296.80px;font-size:10.5px;line-height:11.729px;color:#ee3a3a;left:207.40px;width:100px;text-align:right;transform:scaleY(1.12);transform-origin:0 9.50px;">21.60</div>
<div class="t s" style="top:296.80px;font-size:10.5px;line-height:11.729px;color:#1f1f24;left:245.40px;width:100px;text-align:right;transform:scaleY(1.12);transform-origin:0 9.50px;">29.13</div>
<div class="t s" style="top:296.80px;font-size:10.5px;line-height:11.729px;color:#1f1f24;left:284.40px;width:100px;text-align:right;transform:scaleY(1.12);transform-origin:0 9.50px;">-1.36</div>
<div class="t s" style="top:296.80px;font-size:10.5px;line-height:11.729px;color:#1f1f24;left:323.40px;width:100px;text-align:right;transform:scaleY(1.12);transform-origin:0 9.50px;">467.88</div>
<div class="t s" style="top:312.80px;font-size:10.5px;line-height:11.729px;color:#1f1f24;left:-79.60px;width:100px;text-align:right;transform:scaleY(1.12);transform-origin:0 9.50px;">5.83</div>
<div class="t s" style="top:312.80px;font-size:10.5px;line-height:11.729px;color:#1f1f24;left:-39.60px;width:100px;text-align:right;transform:scaleY(1.12);transform-origin:0 9.50px;">-1.75</div>
<div class="t s" style="top:312.80px;font-size:10.5px;line-height:11.729px;color:#1f1f24;left:0.40px;width:100px;text-align:right;transform:scaleY(1.12);transform-origin:0 9.50px;">465.07</div>
<div class="t s" style="top:312.80px;font-size:10.5px;line-height:11.729px;color:#1f1f24;left:40.40px;width:100px;text-align:right;transform:scaleY(1.12);transform-origin:0 9.50px;">48.65</div>
<div class="t s" style="top:312.80px;font-size:10.5px;line-height:11.729px;color:#1f1f24;left:80.40px;width:100px;text-align:right;transform:scaleY(1.12);transform-origin:0 9.50px;">-2.23</div>
<div class="t s" style="top:312.80px;font-size:10.5px;line-height:11.729px;color:#1f1f24;left:120.40px;width:100px;text-align:right;transform:scaleY(1.12);transform-origin:0 9.50px;">+1</div>
<div class="t s" style="top:312.80px;font-size:10.5px;line-height:11.729px;color:#1f1f24;left:165.40px;width:100px;text-align:right;transform:scaleY(1.12);transform-origin:0 9.50px;">-4</div>
<div class="t s" style="top:312.80px;font-size:10.5px;line-height:11.729px;color:#2c9a38;left:207.40px;width:100px;text-align:right;transform:scaleY(1.12);transform-origin:0 9.50px;">30.75</div>
<div class="t s" style="top:312.80px;font-size:10.5px;line-height:11.729px;color:#1f1f24;left:245.40px;width:100px;text-align:right;transform:scaleY(1.12);transform-origin:0 9.50px;">36.95</div>
<div class="t s" style="top:312.80px;font-size:10.5px;line-height:11.729px;color:#1f1f24;left:284.40px;width:100px;text-align:right;transform:scaleY(1.12);transform-origin:0 9.50px;">-1.56</div>
<div class="t s" style="top:312.80px;font-size:10.5px;line-height:11.729px;color:#1f1f24;left:323.40px;width:100px;text-align:right;transform:scaleY(1.12);transform-origin:0 9.50px;">514.75</div>
<div class="t s" style="top:328.80px;font-size:10.5px;line-height:11.729px;color:#1f1f24;left:-79.60px;width:100px;text-align:right;transform:scaleY(1.12);transform-origin:0 9.50px;">4.08</div>
<div class="t s" style="top:328.80px;font-size:10.5px;line-height:11.729px;color:#1f1f24;left:-39.60px;width:100px;text-align:right;transform:scaleY(1.12);transform-origin:0 9.50px;">-1.94</div>
<div class="t s" style="top:328.80px;font-size:10.5px;line-height:11.729px;color:#1f1f24;left:0.40px;width:100px;text-align:right;transform:scaleY(1.12);transform-origin:0 9.50px;">491.26</div>
<div class="t s" style="top:328.80px;font-size:10.5px;line-height:11.729px;color:#2c9a38;left:207.40px;width:100px;text-align:right;transform:scaleY(1.12);transform-origin:0 9.50px;">42.05</div>
<div class="t s" style="top:328.80px;font-size:10.5px;line-height:11.729px;color:#1f1f24;left:245.40px;width:100px;text-align:right;transform:scaleY(1.12);transform-origin:0 9.50px;">44.97</div>
<div class="t s" style="top:328.80px;font-size:10.5px;line-height:11.729px;color:#1f1f24;left:284.40px;width:100px;text-align:right;transform:scaleY(1.12);transform-origin:0 9.50px;">-1.72</div>
<div class="t s" style="top:328.80px;font-size:10.5px;line-height:11.729px;color:#1f1f24;left:323.40px;width:100px;text-align:right;transform:scaleY(1.12);transform-origin:0 9.50px;">539.82</div>
<div class="t s" style="top:344.80px;font-size:10.5px;line-height:11.729px;color:#1f1f24;left:-79.60px;width:100px;text-align:right;transform:scaleY(1.12);transform-origin:0 9.50px;">2.15</div>
<div class="t s" style="top:344.80px;font-size:10.5px;line-height:11.729px;color:#1f1f24;left:-39.60px;width:100px;text-align:right;transform:scaleY(1.12);transform-origin:0 9.50px;">-2.07</div>
<div class="t s" style="top:344.80px;font-size:10.5px;line-height:11.729px;color:#1f1f24;left:0.40px;width:100px;text-align:right;transform:scaleY(1.12);transform-origin:0 9.50px;">496.01</div>
<div class="t s" style="top:344.80px;font-size:10.5px;line-height:11.729px;color:#2c9a38;left:207.40px;width:100px;text-align:right;transform:scaleY(1.12);transform-origin:0 9.50px;">55.55</div>
<div class="t s" style="top:344.80px;font-size:10.5px;line-height:11.729px;color:#1f1f24;left:245.40px;width:100px;text-align:right;transform:scaleY(1.12);transform-origin:0 9.50px;">52.82</div>
<div class="t s" style="top:344.80px;font-size:10.5px;line-height:11.729px;color:#1f1f24;left:284.40px;width:100px;text-align:right;transform:scaleY(1.12);transform-origin:0 9.50px;">-1.82</div>
<div class="t s" style="top:344.80px;font-size:10.5px;line-height:11.729px;color:#1f1f24;left:323.40px;width:100px;text-align:right;transform:scaleY(1.12);transform-origin:0 9.50px;">542.79</div>
<div class="t s" style="top:360.80px;font-size:10.5px;line-height:11.729px;color:#1f1f24;left:-79.60px;width:100px;text-align:right;transform:scaleY(1.12);transform-origin:0 9.50px;">9.67</div>
<div class="t s" style="top:360.80px;font-size:10.5px;line-height:11.729px;color:#1f1f24;left:-39.60px;width:100px;text-align:right;transform:scaleY(1.12);transform-origin:0 9.50px;">-2.13</div>
<div class="t s" style="top:360.80px;font-size:10.5px;line-height:11.729px;color:#1f1f24;left:0.40px;width:100px;text-align:right;transform:scaleY(1.12);transform-origin:0 9.50px;">482.05</div>
<div class="t s" style="top:360.80px;font-size:10.5px;line-height:11.729px;color:#2c9a38;left:207.40px;width:100px;text-align:right;transform:scaleY(1.12);transform-origin:0 9.50px;">70.90</div>
<div class="t s" style="top:360.80px;font-size:10.5px;line-height:11.729px;color:#1f1f24;left:245.40px;width:100px;text-align:right;transform:scaleY(1.12);transform-origin:0 9.50px;">60.16</div>
<div class="t s" style="top:360.80px;font-size:10.5px;line-height:11.729px;color:#1f1f24;left:284.40px;width:100px;text-align:right;transform:scaleY(1.12);transform-origin:0 9.50px;">-1.87</div>
<div class="t s" style="top:360.80px;font-size:10.5px;line-height:11.729px;color:#1f1f24;left:323.40px;width:100px;text-align:right;transform:scaleY(1.12);transform-origin:0 9.50px;">526.42</div>
<div class="t s" style="top:376.80px;font-size:10.5px;line-height:11.729px;color:#1f1f24;left:-79.60px;width:100px;text-align:right;transform:scaleY(1.12);transform-origin:0 9.50px;">6.48</div>
<div class="t s" style="top:376.80px;font-size:10.5px;line-height:11.729px;color:#1f1f24;left:-39.60px;width:100px;text-align:right;transform:scaleY(1.12);transform-origin:0 9.50px;">-2.13</div>
<div class="t s" style="top:376.80px;font-size:10.5px;line-height:11.729px;color:#1f1f24;left:0.40px;width:100px;text-align:right;transform:scaleY(1.12);transform-origin:0 9.50px;">453.75</div>
<div class="t s" style="top:376.80px;font-size:10.5px;line-height:11.729px;color:#1f1f24;left:40.40px;width:100px;text-align:right;transform:scaleY(1.12);transform-origin:0 9.50px;">96.80</div>
<div class="t s" style="top:376.80px;font-size:10.5px;line-height:11.729px;color:#1f1f24;left:80.40px;width:100px;text-align:right;transform:scaleY(1.12);transform-origin:0 9.50px;">-2.07</div>
<div class="t s" style="top:376.80px;font-size:10.5px;line-height:11.729px;color:#1f1f24;left:165.40px;width:100px;text-align:right;transform:scaleY(1.12);transform-origin:0 9.50px;">+2</div>
<div class="t s" style="top:376.80px;font-size:10.5px;line-height:11.729px;color:#ee3a3a;left:207.40px;width:100px;text-align:right;transform:scaleY(1.12);transform-origin:0 9.50px;">87.85</div>
<div class="t s" style="top:376.80px;font-size:10.5px;line-height:11.729px;color:#1f1f24;left:245.40px;width:100px;text-align:right;transform:scaleY(1.12);transform-origin:0 9.50px;">66.84</div>
<div class="t s" style="top:376.80px;font-size:10.5px;line-height:11.729px;color:#1f1f24;left:284.40px;width:100px;text-align:right;transform:scaleY(1.12);transform-origin:0 9.50px;">-1.87</div>
<div class="t s" style="top:376.80px;font-size:10.5px;line-height:11.729px;color:#1f1f24;left:323.40px;width:100px;text-align:right;transform:scaleY(1.12);transform-origin:0 9.50px;">494.92</div>
<div class="t s" style="top:392.80px;font-size:10.5px;line-height:11.729px;color:#1f1f24;left:-79.60px;width:100px;text-align:right;transform:scaleY(1.12);transform-origin:0 9.50px;">2.52</div>
<div class="t s" style="top:392.80px;font-size:10.5px;line-height:11.729px;color:#1f1f24;left:-39.60px;width:100px;text-align:right;transform:scaleY(1.12);transform-origin:0 9.50px;">-2.07</div>
<div class="t s" style="top:392.80px;font-size:10.5px;line-height:11.729px;color:#1f1f24;left:0.40px;width:100px;text-align:right;transform:scaleY(1.12);transform-origin:0 9.50px;">415.35</div>
<div class="t s" style="top:392.80px;font-size:10.5px;line-height:11.729px;color:#ee3a3a;left:207.40px;width:100px;text-align:right;transform:scaleY(1.12);transform-origin:0 9.50px;">106.20</div>
<div class="t s" style="top:392.80px;font-size:10.5px;line-height:11.729px;color:#1f1f24;left:245.40px;width:100px;text-align:right;transform:scaleY(1.12);transform-origin:0 9.50px;">72.79</div>
<div class="t s" style="top:392.80px;font-size:10.5px;line-height:11.729px;color:#1f1f24;left:284.40px;width:100px;text-align:right;transform:scaleY(1.12);transform-origin:0 9.50px;">-1.83</div>
<div class="t s" style="top:392.80px;font-size:10.5px;line-height:11.729px;color:#1f1f24;left:323.40px;width:100px;text-align:right;transform:scaleY(1.12);transform-origin:0 9.50px;">452.71</div>
<svg style="left:234px;top:405px" width="14" height="4"><path d="M0.5 0.5 L2 2 L3.5 0.5 L5 2 L6.5 0.5 L8 2 L9.5 0.5 L11 2 L12.5 0.5 M0.5 3 L2 1.5 L3.5 3 L5 1.5 L6.5 3 L8 1.5 L9.5 3 L11 1.5 L12.5 3" stroke="#b4bccb" stroke-width="0.6" fill="none"/></svg>
<div class="r" style="left:-1px;top:411.3px;width:270px;height:180.7px;border:1px solid #A7B3C6;background:#fff;"></div>
<div class="r" style="left:271px;top:411.3px;width:326px;height:180.7px;border:1px solid #A7B3C6;background:#fff;"></div>
<div class="r" style="left:0px;top:412.3px;width:268px;height:17.0px;background:#F5F7FB;"></div>
<div class="t" style="top:415.30px;font-size:10.5px;line-height:11.729px;color:#2f3a4c;left:-26.00px;width:59px;text-align:center;transform:scaleY(1.1);transform-origin:0 9.50px;">Delta</div>
<div class="t" style="top:415.30px;font-size:10.5px;line-height:11.729px;color:#2f3a4c;left:13.00px;width:60px;text-align:center;transform:scaleY(1.1);transform-origin:0 9.50px;">Theta</div>
<div class="t" style="top:415.30px;font-size:10.5px;line-height:11.729px;color:#2f3a4c;left:53.00px;width:60px;text-align:center;transform:scaleY(1.1);transform-origin:0 9.50px;">Vega</div>
<div class="t" style="top:415.30px;font-size:10.5px;line-height:11.729px;color:#2f3a4c;left:93.00px;width:60px;text-align:center;transform:scaleY(1.1);transform-origin:0 9.50px;">OrigP...</div>
<div class="t" style="top:415.30px;font-size:10.5px;line-height:11.729px;color:#2f3a4c;left:133.00px;width:60px;text-align:center;transform:scaleY(1.1);transform-origin:0 9.50px;">IVChg</div>
<div class="t" style="top:415.30px;font-size:10.5px;line-height:11.729px;color:#2f3a4c;left:173.00px;width:60px;text-align:center;transform:scaleY(1.1);transform-origin:0 9.50px;">Model</div>
<div class="t" style="top:415.30px;font-size:10.5px;line-height:11.729px;color:#2f3a4c;left:213.00px;width:65px;text-align:center;transform:scaleY(1.1);transform-origin:0 9.50px;">Pos</div>
<div class="r" style="left:23px;top:412.3px;width:1px;height:17.0px;background:#E1E5EC;"></div>
<div class="r" style="left:63px;top:412.3px;width:1px;height:17.0px;background:#E1E5EC;"></div>
<div class="r" style="left:103px;top:412.3px;width:1px;height:17.0px;background:#E1E5EC;"></div>
<div class="r" style="left:143px;top:412.3px;width:1px;height:17.0px;background:#E1E5EC;"></div>
<div class="r" style="left:183px;top:412.3px;width:1px;height:17.0px;background:#E1E5EC;"></div>
<div class="r" style="left:223px;top:412.3px;width:1px;height:17.0px;background:#E1E5EC;"></div>
<div class="r" style="left:272px;top:412.3px;width:324px;height:17.0px;background:#F5F7FB;"></div>
<div class="t" style="top:415.30px;font-size:10.5px;line-height:11.729px;color:#2f3a4c;left:261.40px;width:58.60000000000002px;text-align:center;transform:scaleY(1.1);transform-origin:0 9.50px;">Mid</div>
<div class="t" style="top:415.30px;font-size:10.5px;line-height:11.729px;color:#2f3a4c;left:300.00px;width:58px;text-align:center;transform:scaleY(1.1);transform-origin:0 9.50px;">Delta</div>
<div class="t" style="top:415.30px;font-size:10.5px;line-height:11.729px;color:#2f3a4c;left:338.00px;width:59px;text-align:center;transform:scaleY(1.1);transform-origin:0 9.50px;">Theta</div>
<div class="t" style="top:415.30px;font-size:10.5px;line-height:11.729px;color:#2f3a4c;left:377.00px;width:59px;text-align:center;transform:scaleY(1.1);transform-origin:0 9.50px;">Vega</div>
<div class="t" style="top:415.30px;font-size:10.5px;line-height:11.729px;color:#2f3a4c;left:416.00px;width:58px;text-align:center;transform:scaleY(1.1);transform-origin:0 9.50px;">OrigP...</div>
<div class="t" style="top:415.30px;font-size:10.5px;line-height:11.729px;color:#2f3a4c;left:454.00px;width:59px;text-align:center;transform:scaleY(1.1);transform-origin:0 9.50px;">IVChg</div>
<div class="t" style="top:415.30px;font-size:10.5px;line-height:11.729px;color:#2f3a4c;left:493.00px;width:59px;text-align:center;transform:scaleY(1.1);transform-origin:0 9.50px;">Model</div>
<div class="t" style="top:415.30px;font-size:10.5px;line-height:11.729px;color:#2f3a4c;left:532.00px;width:60px;text-align:center;transform:scaleY(1.1);transform-origin:0 9.50px;">Pos</div>
<div class="r" style="left:310px;top:412.3px;width:1px;height:17.0px;background:#E1E5EC;"></div>
<div class="r" style="left:348px;top:412.3px;width:1px;height:17.0px;background:#E1E5EC;"></div>
<div class="r" style="left:387px;top:412.3px;width:1px;height:17.0px;background:#E1E5EC;"></div>
<div class="r" style="left:426px;top:412.3px;width:1px;height:17.0px;background:#E1E5EC;"></div>
<div class="r" style="left:464px;top:412.3px;width:1px;height:17.0px;background:#E1E5EC;"></div>
<div class="r" style="left:503px;top:412.3px;width:1px;height:17.0px;background:#E1E5EC;"></div>
<div class="r" style="left:542px;top:412.3px;width:1px;height:17.0px;background:#E1E5EC;"></div>
<div class="r" style="left:582px;top:412.3px;width:1px;height:17.0px;background:#E1E5EC;"></div>
<div class="r" style="left:0px;top:429.3px;width:268px;height:16px;background:#A6C0DF;border-top:1px solid #C2CDDD;"></div>
<div class="r" style="left:272px;top:429.3px;width:310.2px;height:16px;background:#A6C0DF;border-top:1px solid #C2CDDD;"></div>
<div class="r" style="left:0px;top:445.3px;width:268px;height:16px;background:#A6C0DF;border-top:1px solid #C2CDDD;"></div>
<div class="r" style="left:272px;top:445.3px;width:310.2px;height:16px;background:#A6C0DF;border-top:1px solid #C2CDDD;"></div>
<div class="r" style="left:0px;top:461.3px;width:268px;height:16px;background:#A6C0DF;border-top:1px solid #C2CDDD;"></div>
<div class="r" style="left:272px;top:461.3px;width:310.2px;height:16px;background:#A6C0DF;border-top:1px solid #C2CDDD;"></div>
<div class="r" style="left:0px;top:477.3px;width:268px;height:16px;background:#A6C0DF;border-top:1px solid #C2CDDD;"></div>
<div class="r" style="left:272px;top:477.3px;width:310.2px;height:16px;background:#A6C0DF;border-top:1px solid #C2CDDD;"></div>
<div class="r" style="left:0px;top:493.3px;width:268px;height:16px;background:#A6C0DF;border-top:1px solid #C2CDDD;"></div>
<div class="r" style="left:272px;top:493.3px;width:310.2px;height:16px;background:#A6C0DF;border-top:1px solid #C2CDDD;"></div>
<div class="r" style="left:0px;top:509.3px;width:268px;height:16px;background:#C7E5EC;border-top:1px solid #C2CDDD;"></div>
<div class="r" style="left:272px;top:509.3px;width:310.2px;height:16px;background:#C7E5EC;border-top:1px solid #C2CDDD;"></div>
<div class="r" style="left:0px;top:525.3px;width:268px;height:16px;background:#C7E5EC;border-top:1px solid #C2CDDD;"></div>
<div class="r" style="left:272px;top:525.3px;width:310.2px;height:16px;background:#C7E5EC;border-top:1px solid #C2CDDD;"></div>
<div class="r" style="left:0px;top:541.3px;width:268px;height:16px;background:#DCDAD0;border-top:1px solid #C2CDDD;"></div>
<div class="r" style="left:272px;top:541.3px;width:310.2px;height:16px;background:#FFFCEE;border-top:1px solid #C2CDDD;"></div>
<div class="r" style="left:0px;top:557.3px;width:268px;height:16px;background:#C7E5EC;border-top:1px solid #C2CDDD;"></div>
<div class="r" style="left:272px;top:557.3px;width:310.2px;height:16px;background:#C7E5EC;border-top:1px solid #C2CDDD;"></div>
<div class="r" style="left:0px;top:573.3px;width:268px;height:16px;background:#C7E5EC;border-top:1px solid #C2CDDD;"></div>
<div class="r" style="left:272px;top:573.3px;width:310.2px;height:16px;background:#C7E5EC;border-top:1px solid #C2CDDD;"></div>
<div class="r" style="left:23px;top:429.3px;width:1px;height:162.7px;background:#C2CDDD;"></div>
<div class="r" style="left:63px;top:429.3px;width:1px;height:162.7px;background:#C2CDDD;"></div>
<div class="r" style="left:103px;top:429.3px;width:1px;height:162.7px;background:#C2CDDD;"></div>
<div class="r" style="left:143px;top:429.3px;width:1px;height:162.7px;background:#C2CDDD;"></div>
<div class="r" style="left:183px;top:429.3px;width:1px;height:162.7px;background:#C2CDDD;"></div>
<div class="r" style="left:223px;top:429.3px;width:1px;height:162.7px;background:#C2CDDD;"></div>
<div class="r" style="left:310px;top:429.3px;width:1px;height:162.7px;background:#C2CDDD;"></div>
<div class="r" style="left:348px;top:429.3px;width:1px;height:162.7px;background:#C2CDDD;"></div>
<div class="r" style="left:387px;top:429.3px;width:1px;height:162.7px;background:#C2CDDD;"></div>
<div class="r" style="left:426px;top:429.3px;width:1px;height:162.7px;background:#C2CDDD;"></div>
<div class="r" style="left:464px;top:429.3px;width:1px;height:162.7px;background:#C2CDDD;"></div>
<div class="r" style="left:503px;top:429.3px;width:1px;height:162.7px;background:#C2CDDD;"></div>
<div class="r" style="left:542px;top:429.3px;width:1px;height:162.7px;background:#C2CDDD;"></div>
<div class="r" style="left:582px;top:429.3px;width:1px;height:162.7px;background:#C2CDDD;"></div>
<div class="r" style="left:583px;top:429.3px;width:13px;height:162.7px;background:#D3D9E6;"></div>
<svg style="left:585px;top:434.3px" width="8" height="5"><path d="M0.5 4 L4 0.5 L7.5 4 Z" fill="#6a7282"/></svg>
<svg style="left:585px;top:583px" width="8" height="5"><path d="M0.5 0.5 L4 4 L7.5 0.5 Z" fill="#6a7282"/></svg>
<div class="r" style="left:584.5px;top:485px;width:9px;height:15px;background:#9AA5B6;"></div>
<div class="t s" style="top:433.60px;font-size:10.5px;line-height:11.729px;color:#1f1f24;left:-79.60px;width:100px;text-align:right;transform:scaleY(1.12);transform-origin:0 9.50px;">6.04</div>
<div class="t s" style="top:433.60px;font-size:10.5px;line-height:11.729px;color:#1f1f24;left:-39.60px;width:100px;text-align:right;transform:scaleY(1.12);transform-origin:0 9.50px;">-1.74</div>
<div class="t s" style="top:433.60px;font-size:10.5px;line-height:11.729px;color:#1f1f24;left:0.40px;width:100px;text-align:right;transform:scaleY(1.12);transform-origin:0 9.50px;">466.02</div>
<div class="t s" style="top:433.60px;font-size:10.5px;line-height:11.729px;color:#2c9a38;left:207.40px;width:100px;text-align:right;transform:scaleY(1.12);transform-origin:0 9.50px;">42.65</div>
<div class="t s" style="top:433.60px;font-size:10.5px;line-height:11.729px;color:#1f1f24;left:245.40px;width:100px;text-align:right;transform:scaleY(1.12);transform-origin:0 9.50px;">-36.16</div>
<div class="t s" style="top:433.60px;font-size:10.5px;line-height:11.729px;color:#1f1f24;left:284.40px;width:100px;text-align:right;transform:scaleY(1.12);transform-origin:0 9.50px;">-1.49</div>
<div class="t s" style="top:433.60px;font-size:10.5px;line-height:11.729px;color:#1f1f24;left:323.40px;width:100px;text-align:right;transform:scaleY(1.12);transform-origin:0 9.50px;">511.07</div>
<div class="t s" style="top:449.60px;font-size:10.5px;line-height:11.729px;color:#1f1f24;left:-79.60px;width:100px;text-align:right;transform:scaleY(1.12);transform-origin:0 9.50px;">0.98</div>
<div class="t s" style="top:449.60px;font-size:10.5px;line-height:11.729px;color:#1f1f24;left:-39.60px;width:100px;text-align:right;transform:scaleY(1.12);transform-origin:0 9.50px;">-1.73</div>
<div class="t s" style="top:449.60px;font-size:10.5px;line-height:11.729px;color:#1f1f24;left:0.40px;width:100px;text-align:right;transform:scaleY(1.12);transform-origin:0 9.50px;">439.12</div>
<div class="t s" style="top:449.60px;font-size:10.5px;line-height:11.729px;color:#1f1f24;left:40.40px;width:100px;text-align:right;transform:scaleY(1.12);transform-origin:0 9.50px;">30.95</div>
<div class="t s" style="top:449.60px;font-size:10.5px;line-height:11.729px;color:#1f1f24;left:80.40px;width:100px;text-align:right;transform:scaleY(1.12);transform-origin:0 9.50px;">0.92</div>
<div class="t s" style="top:449.60px;font-size:10.5px;line-height:11.729px;color:#1f1f24;left:120.40px;width:100px;text-align:right;transform:scaleY(1.12);transform-origin:0 9.50px;">+1</div>
<div class="t s" style="top:449.60px;font-size:10.5px;line-height:11.729px;color:#1f1f24;left:165.40px;width:100px;text-align:right;transform:scaleY(1.12);transform-origin:0 9.50px;">-1</div>
<div class="t s" style="top:449.60px;font-size:10.5px;line-height:11.729px;color:#2c9a38;left:207.40px;width:100px;text-align:right;transform:scaleY(1.12);transform-origin:0 9.50px;">36.05</div>
<div class="t s" style="top:449.60px;font-size:10.5px;line-height:11.729px;color:#1f1f24;left:245.40px;width:100px;text-align:right;transform:scaleY(1.12);transform-origin:0 9.50px;">-31.31</div>
<div class="t s" style="top:449.60px;font-size:10.5px;line-height:11.729px;color:#1f1f24;left:284.40px;width:100px;text-align:right;transform:scaleY(1.12);transform-origin:0 9.50px;">-1.49</div>
<div class="t s" style="top:449.60px;font-size:10.5px;line-height:11.729px;color:#1f1f24;left:323.40px;width:100px;text-align:right;transform:scaleY(1.12);transform-origin:0 9.50px;">483.28</div>
<div class="t s" style="top:465.60px;font-size:10.5px;line-height:11.729px;color:#1f1f24;left:-79.60px;width:100px;text-align:right;transform:scaleY(1.12);transform-origin:0 9.50px;">6.54</div>
<div class="t s" style="top:465.60px;font-size:10.5px;line-height:11.729px;color:#1f1f24;left:-39.60px;width:100px;text-align:right;transform:scaleY(1.12);transform-origin:0 9.50px;">-1.69</div>
<div class="t s" style="top:465.60px;font-size:10.5px;line-height:11.729px;color:#1f1f24;left:0.40px;width:100px;text-align:right;transform:scaleY(1.12);transform-origin:0 9.50px;">408.14</div>
<div class="t s" style="top:465.60px;font-size:10.5px;line-height:11.729px;color:#2c9a38;left:207.40px;width:100px;text-align:right;transform:scaleY(1.12);transform-origin:0 9.50px;">30.55</div>
<div class="t s" style="top:465.60px;font-size:10.5px;line-height:11.729px;color:#1f1f24;left:245.40px;width:100px;text-align:right;transform:scaleY(1.12);transform-origin:0 9.50px;">-27.04</div>
<div class="t s" style="top:465.60px;font-size:10.5px;line-height:11.729px;color:#1f1f24;left:284.40px;width:100px;text-align:right;transform:scaleY(1.12);transform-origin:0 9.50px;">-1.46</div>
<div class="t s" style="top:465.60px;font-size:10.5px;line-height:11.729px;color:#1f1f24;left:323.40px;width:100px;text-align:right;transform:scaleY(1.12);transform-origin:0 9.50px;">451.32</div>
<div class="t s" style="top:481.60px;font-size:10.5px;line-height:11.729px;color:#1f1f24;left:-79.60px;width:100px;text-align:right;transform:scaleY(1.12);transform-origin:0 9.50px;">2.73</div>
<div class="t s" style="top:481.60px;font-size:10.5px;line-height:11.729px;color:#1f1f24;left:-39.60px;width:100px;text-align:right;transform:scaleY(1.12);transform-origin:0 9.50px;">-1.63</div>
<div class="t s" style="top:481.60px;font-size:10.5px;line-height:11.729px;color:#1f1f24;left:0.40px;width:100px;text-align:right;transform:scaleY(1.12);transform-origin:0 9.50px;">375.61</div>
<div class="t s" style="top:481.60px;font-size:10.5px;line-height:11.729px;color:#1f1f24;left:40.40px;width:100px;text-align:right;transform:scaleY(1.12);transform-origin:0 9.50px;">35.15</div>
<div class="t s" style="top:481.60px;font-size:10.5px;line-height:11.729px;color:#1f1f24;left:80.40px;width:100px;text-align:right;transform:scaleY(1.12);transform-origin:0 9.50px;">0.88</div>
<div class="t s" style="top:481.60px;font-size:10.5px;line-height:11.729px;color:#1f1f24;left:165.40px;width:100px;text-align:right;transform:scaleY(1.12);transform-origin:0 9.50px;">-1</div>
<div class="t s" style="top:481.60px;font-size:10.5px;line-height:11.729px;color:#2c9a38;left:207.40px;width:100px;text-align:right;transform:scaleY(1.12);transform-origin:0 9.50px;">26.00</div>
<div class="t s" style="top:481.60px;font-size:10.5px;line-height:11.729px;color:#1f1f24;left:245.40px;width:100px;text-align:right;transform:scaleY(1.12);transform-origin:0 9.50px;">-23.33</div>
<div class="t s" style="top:481.60px;font-size:10.5px;line-height:11.729px;color:#1f1f24;left:284.40px;width:100px;text-align:right;transform:scaleY(1.12);transform-origin:0 9.50px;">-1.42</div>
<div class="t s" style="top:481.60px;font-size:10.5px;line-height:11.729px;color:#1f1f24;left:323.40px;width:100px;text-align:right;transform:scaleY(1.12);transform-origin:0 9.50px;">417.50</div>
<div class="t s" style="top:497.60px;font-size:10.5px;line-height:11.729px;color:#1f1f24;left:-79.60px;width:100px;text-align:right;transform:scaleY(1.12);transform-origin:0 9.50px;">9.43</div>
<div class="t s" style="top:497.60px;font-size:10.5px;line-height:11.729px;color:#1f1f24;left:-39.60px;width:100px;text-align:right;transform:scaleY(1.12);transform-origin:0 9.50px;">-1.55</div>
<div class="t s" style="top:497.60px;font-size:10.5px;line-height:11.729px;color:#1f1f24;left:0.40px;width:100px;text-align:right;transform:scaleY(1.12);transform-origin:0 9.50px;">342.50</div>
<div class="t s" style="top:497.60px;font-size:10.5px;line-height:11.729px;color:#2c9a38;left:207.40px;width:100px;text-align:right;transform:scaleY(1.12);transform-origin:0 9.50px;">22.10</div>
<div class="t s" style="top:497.60px;font-size:10.5px;line-height:11.729px;color:#1f1f24;left:245.40px;width:100px;text-align:right;transform:scaleY(1.12);transform-origin:0 9.50px;">-20.09</div>
<div class="t s" style="top:497.60px;font-size:10.5px;line-height:11.729px;color:#1f1f24;left:284.40px;width:100px;text-align:right;transform:scaleY(1.12);transform-origin:0 9.50px;">-1.36</div>
<div class="t s" style="top:497.60px;font-size:10.5px;line-height:11.729px;color:#1f1f24;left:323.40px;width:100px;text-align:right;transform:scaleY(1.12);transform-origin:0 9.50px;">382.89</div>
<div class="t s" style="top:513.60px;font-size:10.5px;line-height:11.729px;color:#1f1f24;left:-79.60px;width:100px;text-align:right;transform:scaleY(1.12);transform-origin:0 9.50px;">6.63</div>
<div class="t s" style="top:513.60px;font-size:10.5px;line-height:11.729px;color:#1f1f24;left:-39.60px;width:100px;text-align:right;transform:scaleY(1.12);transform-origin:0 9.50px;">-1.47</div>
<div class="t s" style="top:513.60px;font-size:10.5px;line-height:11.729px;color:#1f1f24;left:0.40px;width:100px;text-align:right;transform:scaleY(1.12);transform-origin:0 9.50px;">310.67</div>
<div class="t s" style="top:513.60px;font-size:10.5px;line-height:11.729px;color:#1f1f24;left:120.40px;width:100px;text-align:right;transform:scaleY(1.12);transform-origin:0 9.50px;">-1</div>
<div class="t s" style="top:513.60px;font-size:10.5px;line-height:11.729px;color:#2c9a38;left:207.40px;width:100px;text-align:right;transform:scaleY(1.12);transform-origin:0 9.50px;">18.90</div>
<div class="t s" style="top:513.60px;font-size:10.5px;line-height:11.729px;color:#1f1f24;left:245.40px;width:100px;text-align:right;transform:scaleY(1.12);transform-origin:0 9.50px;">-17.32</div>
<div class="t s" style="top:513.60px;font-size:10.5px;line-height:11.729px;color:#1f1f24;left:284.40px;width:100px;text-align:right;transform:scaleY(1.12);transform-origin:0 9.50px;">-1.29</div>
<div class="t s" style="top:513.60px;font-size:10.5px;line-height:11.729px;color:#1f1f24;left:323.40px;width:100px;text-align:right;transform:scaleY(1.12);transform-origin:0 9.50px;">349.34</div>
<div class="t s" style="top:529.60px;font-size:10.5px;line-height:11.729px;color:#1f1f24;left:-79.60px;width:100px;text-align:right;transform:scaleY(1.12);transform-origin:0 9.50px;">4.25</div>
<div class="t s" style="top:529.60px;font-size:10.5px;line-height:11.729px;color:#1f1f24;left:-39.60px;width:100px;text-align:right;transform:scaleY(1.12);transform-origin:0 9.50px;">-1.38</div>
<div class="t s" style="top:529.60px;font-size:10.5px;line-height:11.729px;color:#1f1f24;left:0.40px;width:100px;text-align:right;transform:scaleY(1.12);transform-origin:0 9.50px;">280.45</div>
<div class="t s" style="top:529.60px;font-size:10.5px;line-height:11.729px;color:#2c9a38;left:207.40px;width:100px;text-align:right;transform:scaleY(1.12);transform-origin:0 9.50px;">16.25</div>
<div class="t s" style="top:529.60px;font-size:10.5px;line-height:11.729px;color:#1f1f24;left:245.40px;width:100px;text-align:right;transform:scaleY(1.12);transform-origin:0 9.50px;">-14.97</div>
<div class="t s" style="top:529.60px;font-size:10.5px;line-height:11.729px;color:#1f1f24;left:284.40px;width:100px;text-align:right;transform:scaleY(1.12);transform-origin:0 9.50px;">-1.22</div>
<div class="t s" style="top:529.60px;font-size:10.5px;line-height:11.729px;color:#1f1f24;left:323.40px;width:100px;text-align:right;transform:scaleY(1.12);transform-origin:0 9.50px;">317.56</div>
<div class="t s" style="top:545.60px;font-size:10.5px;line-height:11.729px;color:#1f1f24;left:-79.60px;width:100px;text-align:right;transform:scaleY(1.12);transform-origin:0 9.50px;">2.24</div>
<div class="t s" style="top:545.60px;font-size:10.5px;line-height:11.729px;color:#3a3a3a;left:-39.60px;width:100px;text-align:right;transform:scaleY(1.12);transform-origin:0 9.50px;">-1.29</div>
<div class="t s" style="top:545.60px;font-size:10.5px;line-height:11.729px;color:#3a3a3a;left:0.40px;width:100px;text-align:right;transform:scaleY(1.12);transform-origin:0 9.50px;">252.55</div>
<div class="t s" style="top:545.60px;font-size:10.5px;line-height:11.729px;color:#6aa83a;left:207.40px;width:100px;text-align:right;transform:scaleY(1.12);transform-origin:0 9.50px;">13.95</div>
<div class="t s" style="top:545.60px;font-size:10.5px;line-height:11.729px;color:#1f1f24;left:245.40px;width:100px;text-align:right;transform:scaleY(1.12);transform-origin:0 9.50px;">-12.92</div>
<div class="t s" style="top:545.60px;font-size:10.5px;line-height:11.729px;color:#1f1f24;left:284.40px;width:100px;text-align:right;transform:scaleY(1.12);transform-origin:0 9.50px;">-1.15</div>
<div class="t s" style="top:545.60px;font-size:10.5px;line-height:11.729px;color:#1f1f24;left:323.40px;width:100px;text-align:right;transform:scaleY(1.12);transform-origin:0 9.50px;">287.24</div>
<div class="t s" style="top:561.60px;font-size:10.5px;line-height:11.729px;color:#1f1f24;left:-79.60px;width:100px;text-align:right;transform:scaleY(1.12);transform-origin:0 9.50px;">0.51</div>
<div class="t s" style="top:561.60px;font-size:10.5px;line-height:11.729px;color:#1f1f24;left:-39.60px;width:100px;text-align:right;transform:scaleY(1.12);transform-origin:0 9.50px;">-1.20</div>
<div class="t s" style="top:561.60px;font-size:10.5px;line-height:11.729px;color:#1f1f24;left:0.40px;width:100px;text-align:right;transform:scaleY(1.12);transform-origin:0 9.50px;">226.57</div>
<div class="t s" style="top:561.60px;font-size:10.5px;line-height:11.729px;color:#2c9a38;left:207.40px;width:100px;text-align:right;transform:scaleY(1.12);transform-origin:0 9.50px;">12.15</div>
<div class="t s" style="top:561.60px;font-size:10.5px;line-height:11.729px;color:#1f1f24;left:245.40px;width:100px;text-align:right;transform:scaleY(1.12);transform-origin:0 9.50px;">-11.23</div>
<div class="t s" style="top:561.60px;font-size:10.5px;line-height:11.729px;color:#1f1f24;left:284.40px;width:100px;text-align:right;transform:scaleY(1.12);transform-origin:0 9.50px;">-1.08</div>
<div class="t s" style="top:561.60px;font-size:10.5px;line-height:11.729px;color:#1f1f24;left:323.40px;width:100px;text-align:right;transform:scaleY(1.12);transform-origin:0 9.50px;">260.35</div>
<div class="t s" style="top:577.60px;font-size:10.5px;line-height:11.729px;color:#1f1f24;left:-79.60px;width:100px;text-align:right;transform:scaleY(1.12);transform-origin:0 9.50px;">9.11</div>
<div class="t s" style="top:577.60px;font-size:10.5px;line-height:11.729px;color:#1f1f24;left:-39.60px;width:100px;text-align:right;transform:scaleY(1.12);transform-origin:0 9.50px;">-1.12</div>
<div class="t s" style="top:577.60px;font-size:10.5px;line-height:11.729px;color:#1f1f24;left:0.40px;width:100px;text-align:right;transform:scaleY(1.12);transform-origin:0 9.50px;">204.01</div>
<div class="t s" style="top:577.60px;font-size:10.5px;line-height:11.729px;color:#ee3a3a;left:207.40px;width:100px;text-align:right;transform:scaleY(1.12);transform-origin:0 9.50px;">10.55</div>
<div class="t s" style="top:577.60px;font-size:10.5px;line-height:11.729px;color:#1f1f24;left:245.40px;width:100px;text-align:right;transform:scaleY(1.12);transform-origin:0 9.50px;">-9.75</div>
<div class="t s" style="top:577.60px;font-size:10.5px;line-height:11.729px;color:#1f1f24;left:284.40px;width:100px;text-align:right;transform:scaleY(1.12);transform-origin:0 9.50px;">-1.01</div>
<div class="t s" style="top:577.60px;font-size:10.5px;line-height:11.729px;color:#1f1f24;left:323.40px;width:100px;text-align:right;transform:scaleY(1.12);transform-origin:0 9.50px;">235.04</div>
<div class="r" style="left:0px;top:590px;width:268px;height:2px;background:#fff;"></div>
<div class="r" style="left:272px;top:590px;width:310px;height:2px;background:#fff;"></div>
<div class="r" style="left:184px;top:542px;width:38px;height:15px;background:#FFF2BC;"></div>
<div class="r" style="left:220px;top:543px;width:1px;height:12.5px;background:#444;"></div>
<svg style="left:234px;top:596px" width="14" height="4"><path d="M0.5 0.5 L2 2 L3.5 0.5 L5 2 L6.5 0.5 L8 2 L9.5 0.5 L11 2 L12.5 0.5 M0.5 3 L2 1.5 L3.5 3 L5 1.5 L6.5 3 L8 1.5 L9.5 3 L11 1.5 L12.5 3" stroke="#b4bccb" stroke-width="0.6" fill="none"/></svg>
<div class="r" style="left:-2px;top:605px;width:93.3px;height:16px;background:#fff;border:1px solid #B3BED0;"></div>
<div class="t" style="top:607.80px;font-size:10.5px;line-height:11.729px;color:#1b1b1b;left:0.00px;">ed</div>
<svg style="left:80px;top:610px" width="7" height="5"><path d="M0.5 0.5 H6 L3.25 3.5 Z" fill="#555"/></svg>
<div class="r" style="left:98.7px;top:605px;width:68.3px;height:16px;background:#fff;border:1px solid #B3BED0;"></div>
<div class="t" style="top:607.80px;font-size:10.5px;line-height:11.729px;color:#1b1b1b;left:102.00px;">Auto</div>
<svg style="left:155px;top:610px" width="7" height="5"><path d="M0.5 0.5 H6 L3.25 3.5 Z" fill="#555"/></svg>
<div class="r" style="left:478px;top:608px;width:9.5px;height:9.5px;background:#fff;border:1px solid #A9B3C2;"></div>
<div class="t" style="top:607.39px;font-size:10.4px;line-height:11.617px;color:#2a3446;left:490.50px;">Ignore Today's Trades</div>
<div class="r" style="left:-1px;top:624.5px;width:598.5px;height:50.5px;background:#fff;border:1px solid #A7B3C6;"></div>
<div class="r" style="left:0px;top:624.8px;width:597px;height:17.200000000000045px;background:#F5F7FB;"></div>
<div class="t" style="top:627.80px;font-size:10.5px;line-height:11.729px;color:#2f3a4c;left:-15.00px;width:73px;text-align:center;transform:scaleY(1.1);transform-origin:0 9.50px;">Cost</div>
<div class="t" style="top:627.80px;font-size:10.5px;line-height:11.729px;color:#2f3a4c;left:38.00px;width:74px;text-align:center;transform:scaleY(1.1);transform-origin:0 9.50px;">Curr Cost</div>
<div class="t" style="top:627.80px;font-size:10.5px;line-height:11.729px;color:#2f3a4c;left:92.00px;width:75px;text-align:center;transform:scaleY(1.1);transform-origin:0 9.50px;">Commis...</div>
<div class="t" style="top:627.80px;font-size:10.5px;line-height:11.729px;color:#2f3a4c;left:147.00px;width:75px;text-align:center;transform:scaleY(1.1);transform-origin:0 9.50px;">PnL</div>
<div class="t" style="top:627.80px;font-size:10.5px;line-height:11.729px;color:#2f3a4c;left:202.00px;width:74px;text-align:center;transform:scaleY(1.1);transform-origin:0 9.50px;">PnL%</div>
<div class="t" style="top:627.80px;font-size:10.5px;line-height:11.729px;color:#2f3a4c;left:256.00px;width:75px;text-align:center;transform:scaleY(1.1);transform-origin:0 9.50px;">Delta</div>
<div class="t" style="top:627.80px;font-size:10.5px;line-height:11.729px;color:#2f3a4c;left:311.00px;width:74px;text-align:center;transform:scaleY(1.1);transform-origin:0 9.50px;">Gamma</div>
<div class="t" style="top:627.80px;font-size:10.5px;line-height:11.729px;color:#2f3a4c;left:365.00px;width:75px;text-align:center;transform:scaleY(1.1);transform-origin:0 9.50px;">Theta</div>
<div class="t" style="top:627.80px;font-size:10.5px;line-height:11.729px;color:#2f3a4c;left:420.00px;width:74px;text-align:center;transform:scaleY(1.1);transform-origin:0 9.50px;">Vega</div>
<div class="t" style="top:627.80px;font-size:10.5px;line-height:11.729px;color:#2f3a4c;left:474.00px;width:75px;text-align:center;transform:scaleY(1.1);transform-origin:0 9.50px;">T/D</div>
<div class="t" style="top:627.80px;font-size:10.5px;line-height:11.729px;color:#2f3a4c;left:529.00px;width:78px;text-align:center;transform:scaleY(1.1);transform-origin:0 9.50px;">Plot</div>
<div class="r" style="left:48px;top:624.8px;width:1px;height:17.200000000000045px;background:#E1E5EC;"></div>
<div class="r" style="left:102px;top:624.8px;width:1px;height:17.200000000000045px;background:#E1E5EC;"></div>
<div class="r" style="left:157px;top:624.8px;width:1px;height:17.200000000000045px;background:#E1E5EC;"></div>
<div class="r" style="left:212px;top:624.8px;width:1px;height:17.200000000000045px;background:#E1E5EC;"></div>
<div class="r" style="left:266px;top:624.8px;width:1px;height:17.200000000000045px;background:#E1E5EC;"></div>
<div class="r" style="left:321px;top:624.8px;width:1px;height:17.200000000000045px;background:#E1E5EC;"></div>
<div class="r" style="left:375px;top:624.8px;width:1px;height:17.200000000000045px;background:#E1E5EC;"></div>
<div class="r" style="left:430px;top:624.8px;width:1px;height:17.200000000000045px;background:#E1E5EC;"></div>
<div class="r" style="left:484px;top:624.8px;width:1px;height:17.200000000000045px;background:#E1E5EC;"></div>
<div class="r" style="left:539px;top:624.8px;width:1px;height:17.200000000000045px;background:#E1E5EC;"></div>
<div class="r" style="left:0px;top:642px;width:597px;height:1px;background:#D3D9E4;"></div>
<div class="r" style="left:0px;top:658px;width:597px;height:1px;background:#D3D9E4;"></div>
<div class="r" style="left:48px;top:643px;width:1px;height:32px;background:#D3D9E4;"></div>
<div class="r" style="left:102px;top:643px;width:1px;height:32px;background:#D3D9E4;"></div>
<div class="r" style="left:157px;top:643px;width:1px;height:32px;background:#D3D9E4;"></div>
<div class="r" style="left:212px;top:643px;width:1px;height:32px;background:#D3D9E4;"></div>
<div class="r" style="left:266px;top:643px;width:1px;height:32px;background:#D3D9E4;"></div>
<div class="r" style="left:321px;top:643px;width:1px;height:32px;background:#D3D9E4;"></div>
<div class="r" style="left:375px;top:643px;width:1px;height:32px;background:#D3D9E4;"></div>
<div class="r" style="left:430px;top:643px;width:1px;height:32px;background:#D3D9E4;"></div>
<div class="r" style="left:484px;top:643px;width:1px;height:32px;background:#D3D9E4;"></div>
<div class="r" style="left:539px;top:643px;width:1px;height:32px;background:#D3D9E4;"></div>
<div class="t s" style="top:646.30px;font-size:10.5px;line-height:11.729px;color:#1f1f24;left:-54.60px;width:100px;text-align:right;transform:scaleY(1.12);transform-origin:0 9.50px;">-8,344.00</div>
<div class="t s" style="top:646.30px;font-size:10.5px;line-height:11.729px;color:#1f1f24;left:-0.60px;width:100px;text-align:right;transform:scaleY(1.12);transform-origin:0 9.50px;">10,090.00</div>
<div class="t s" style="top:646.30px;font-size:10.5px;line-height:11.729px;color:#1f1f24;left:54.40px;width:100px;text-align:right;transform:scaleY(1.12);transform-origin:0 9.50px;">14.00</div>
<div class="t s" style="top:646.30px;font-size:10.5px;line-height:11.729px;color:#2c9a38;left:109.40px;width:100px;text-align:right;transform:scaleY(1.12);transform-origin:0 9.50px;">1,746.00</div>
<div class="t s" style="top:646.30px;font-size:10.5px;line-height:11.729px;color:#2c9a38;left:163.40px;width:100px;text-align:right;transform:scaleY(1.12);transform-origin:0 9.50px;">21.48%</div>
<div class="t s" style="top:646.30px;font-size:10.5px;line-height:11.729px;color:#1f1f24;left:218.40px;width:100px;text-align:right;transform:scaleY(1.12);transform-origin:0 9.50px;">10.53</div>
<div class="t s" style="top:646.30px;font-size:10.5px;line-height:11.729px;color:#1f1f24;left:272.40px;width:100px;text-align:right;transform:scaleY(1.12);transform-origin:0 9.50px;">-0.55</div>
<div class="t s" style="top:646.30px;font-size:10.5px;line-height:11.729px;color:#1f1f24;left:327.40px;width:100px;text-align:right;transform:scaleY(1.12);transform-origin:0 9.50px;">253.81</div>
<div class="t s" style="top:646.30px;font-size:10.5px;line-height:11.729px;color:#1f1f24;left:381.40px;width:100px;text-align:right;transform:scaleY(1.12);transform-origin:0 9.50px;">-78.69</div>
<div class="t s" style="top:646.30px;font-size:10.5px;line-height:11.729px;color:#1f1f24;left:436.40px;width:100px;text-align:right;transform:scaleY(1.12);transform-origin:0 9.50px;">24.1</div>
<div class="t s" style="top:662.30px;font-size:10.5px;line-height:11.729px;color:#1f1f24;left:-54.60px;width:100px;text-align:right;transform:scaleY(1.12);transform-origin:0 9.50px;">-11,571.80</div>
<div class="t s" style="top:662.30px;font-size:10.5px;line-height:11.729px;color:#1f1f24;left:-0.60px;width:100px;text-align:right;transform:scaleY(1.12);transform-origin:0 9.50px;">13,315.00</div>
<div class="t s" style="top:662.30px;font-size:10.5px;line-height:11.729px;color:#1f1f24;left:54.40px;width:100px;text-align:right;transform:scaleY(1.12);transform-origin:0 9.50px;">16.80</div>
<div class="t s" style="top:662.30px;font-size:10.5px;line-height:11.729px;color:#2c9a38;left:109.40px;width:100px;text-align:right;transform:scaleY(1.12);transform-origin:0 9.50px;">1,743.20</div>
<div class="t s" style="top:662.30px;font-size:10.5px;line-height:11.729px;color:#2c9a38;left:163.40px;width:100px;text-align:right;transform:scaleY(1.12);transform-origin:0 9.50px;">12.39%</div>
<div class="t s" style="top:662.30px;font-size:10.5px;line-height:11.729px;color:#1f1f24;left:218.40px;width:100px;text-align:right;transform:scaleY(1.12);transform-origin:0 9.50px;">11.43</div>
<div class="t s" style="top:662.30px;font-size:10.5px;line-height:11.729px;color:#1f1f24;left:272.40px;width:100px;text-align:right;transform:scaleY(1.12);transform-origin:0 9.50px;">-0.40</div>
<div class="t s" style="top:662.30px;font-size:10.5px;line-height:11.729px;color:#1f1f24;left:327.40px;width:100px;text-align:right;transform:scaleY(1.12);transform-origin:0 9.50px;">175.35</div>
<div class="t s" style="top:662.30px;font-size:10.5px;line-height:11.729px;color:#1f1f24;left:381.40px;width:100px;text-align:right;transform:scaleY(1.12);transform-origin:0 9.50px;">160.17</div>
<div class="t s" style="top:662.30px;font-size:10.5px;line-height:11.729px;color:#1f1f24;left:436.40px;width:100px;text-align:right;transform:scaleY(1.12);transform-origin:0 9.50px;">15.3</div>
<svg style="left:563px;top:645px" width="11" height="11"><rect x="0.5" y="0.5" width="9" height="9" fill="#fff" stroke="#b3b9c4"/><path d="M2.3 5 L4.2 7 L8 2.5" stroke="#555" stroke-width="1" fill="none"/></svg>
<svg style="left:563px;top:661px" width="11" height="11"><rect x="0.5" y="0.5" width="9" height="9" fill="#fff" stroke="#b3b9c4"/><path d="M2.3 5 L4.2 7 L8 2.5" stroke="#555" stroke-width="1" fill="none"/></svg>
<svg style="left:600px;top:399px" width="6" height="14"><path d="M1 1 L4.5 3.5 L1 6 L4.5 8.5 L1 11 M4.5 1 L1 3.5 L4.5 6 L1 8.5 L4.5 11" stroke="#b0b8c6" stroke-width="0.7" fill="none"/></svg>
<div class="r" style="left:608px;top:137px;width:1px;height:538px;background:#A9B4C6;"></div>
<div class="r" style="left:609px;top:138.5px;width:427px;height:1px;background:#B3BDCD;"></div>
<div class="r" style="left:609px;top:160px;width:471px;height:1px;background:#B3BDCD;"></div>
<div class="r" style="left:609px;top:139px;width:64.5px;height:22px;background:#D6DBE8;"></div>
<div class="r" style="left:673.5px;top:139px;width:1px;height:21.5px;background:#B3BDCD;"></div>
<div class="r" style="left:740.4px;top:139px;width:1px;height:21.5px;background:#B3BDCD;"></div>
<div class="r" style="left:846.7px;top:139px;width:1px;height:21.5px;background:#B3BDCD;"></div>
<div class="r" style="left:901.3px;top:139px;width:1px;height:21.5px;background:#B3BDCD;"></div>
<div class="r" style="left:1035.6px;top:139px;width:1px;height:21.5px;background:#B3BDCD;"></div>
<div class="t" style="top:144.45px;font-size:10px;line-height:11.170px;color:#2a3446;left:619.00px;">Risk Chart</div>
<div class="t" style="top:144.45px;font-size:10px;line-height:11.170px;color:#2a3446;left:682.70px;">Price Chart</div>
<div class="t" style="top:144.45px;font-size:10px;line-height:11.170px;color:#2a3446;left:750.70px;">Movement Analysis</div>
<div class="t" style="top:144.63px;font-size:9.8px;line-height:10.947px;color:#2a3446;left:856.60px;">Volatility</div>
<div class="t" style="top:144.45px;font-size:10px;line-height:11.170px;color:#2a3446;left:911.00px;">Statistics &amp; Fundamentals</div>
<div class="t" style="top:166.75px;font-size:10px;line-height:11.170px;color:#2a3446;left:613.80px;">Vol Adjust</div>
<div class="r" style="left:662.5px;top:163.5px;width:45.5px;height:16px;background:#fff;border:1px solid #B3BED0;"></div>
<div class="t" style="top:166.80px;font-size:10.5px;line-height:11.729px;color:#1b1b1b;left:672.00px;width:20px;text-align:right;">0</div>
<svg style="left:697px;top:165px" width="8" height="13"><path d="M1.8 4 L4 1.8 L6.2 4 M1.8 9 L4 11.2 L6.2 9" stroke="#555" stroke-width="1" fill="none"/></svg>
<div class="t" style="top:166.75px;font-size:10px;line-height:11.170px;color:#2a3446;left:976.00px;width:60px;text-align:right;">Projection</div>
<div class="r" style="left:1040.5px;top:163.5px;width:45px;height:16px;background:#fff;border:1px solid #B3BED0;"></div>
<div class="t" style="top:166.80px;font-size:10.5px;line-height:11.729px;color:#1b1b1b;left:1043.00px;">20/02/2025</div>
<div class="r" style="left:609px;top:182px;width:471px;height:471px;background:#fff;"></div>
<div class="r" style="left:609px;top:652.5px;width:471px;height:23px;background:#28374F;"></div>
<div class="t" style="top:658.90px;font-size:10.5px;line-height:11.729px;color:#eef2f8;left:1015.50px;width:60px;text-align:right;">500%</div>
<svg style="left:609px;top:182px" width="471" height="470" font-family="Liberation Sans"><defs><clipPath id="pc"><rect x="47.6" y="15.4" width="500" height="275.5"/></clipPath></defs><rect x="244" y="15.400000000000006" width="54" height="275.0" fill="#8FCADB"/><rect x="298" y="15.400000000000006" width="107" height="275.0" fill="#4E7FBC"/><rect x="405" y="15.400000000000006" width="52.799999999999955" height="275.0" fill="#8FCADB"/><line x1="44.700000000000045" x2="471" y1="15.40" y2="15.40" stroke="#DADADA" stroke-opacity="0.75" stroke-width="1"/><line x1="44.700000000000045" x2="471" y1="35.04" y2="35.04" stroke="#DADADA" stroke-opacity="0.75" stroke-width="1"/><line x1="44.700000000000045" x2="471" y1="54.68" y2="54.68" stroke="#DADADA" stroke-opacity="0.75" stroke-width="1"/><line x1="44.700000000000045" x2="471" y1="74.32" y2="74.32" stroke="#DADADA" stroke-opacity="0.75" stroke-width="1"/><line x1="44.700000000000045" x2="471" y1="93.96" y2="93.96" stroke="#DADADA" stroke-opacity="0.75" stroke-width="1"/><line x1="44.700000000000045" x2="471" y1="113.60" y2="113.60" stroke="#DADADA" stroke-opacity="0.75" stroke-width="1"/><line x1="44.700000000000045" x2="471" y1="133.24" y2="133.24" stroke="#DADADA" stroke-opacity="0.75" stroke-width="1"/><line x1="44.700000000000045" x2="471" y1="152.88" y2="152.88" stroke="#DADADA" stroke-opacity="0.75" stroke-width="1"/><line x1="44.700000000000045" x2="471" y1="172.52" y2="172.52" stroke="#DADADA" stroke-opacity="0.75" stroke-width="1"/><line x1="44.700000000000045" x2="471" y1="192.16" y2="192.16" stroke="#DADADA" stroke-opacity="0.75" stroke-width="1"/><line x1="44.700000000000045" x2="471" y1="211.80" y2="211.80" stroke="#DADADA" stroke-opacity="0.75" stroke-width="1"/><line x1="44.700000000000045" x2="471" y1="231.44" y2="231.44" stroke="#DADADA" stroke-opacity="0.75" stroke-width="1"/><line x1="44.700000000000045" x2="471" y1="251.08" y2="251.08" stroke="#DADADA" stroke-opacity="0.75" stroke-width="1"/><line x1="44.700000000000045" x2="471" y1="270.72" y2="270.72" stroke="#DADADA" stroke-opacity="0.75" stroke-width="1"/><line x1="44.700000000000045" x2="471" y1="290.36" y2="290.36" stroke="#DADADA" stroke-opacity="0.75" stroke-width="1"/><line x1="89.00" x2="89.00" y1="12.400000000000006" y2="293.4" stroke="#DADADA" stroke-opacity="0.75" stroke-width="1"/><line x1="156.54" x2="156.54" y1="12.400000000000006" y2="293.4" stroke="#DADADA" stroke-opacity="0.75" stroke-width="1"/><line x1="224.08" x2="224.08" y1="12.400000000000006" y2="293.4" stroke="#DADADA" stroke-opacity="0.75" stroke-width="1"/><line x1="291.62" x2="291.62" y1="12.400000000000006" y2="293.4" stroke="#DADADA" stroke-opacity="0.75" stroke-width="1"/><line x1="359.16" x2="359.16" y1="12.400000000000006" y2="293.4" stroke="#DADADA" stroke-opacity="0.75" stroke-width="1"/><line x1="426.70" x2="426.70" y1="12.400000000000006" y2="293.4" stroke="#DADADA" stroke-opacity="0.75" stroke-width="1"/><line x1="47.60000000000002" x2="47.60000000000002" y1="15.400000000000006" y2="290.4" stroke="#DADADA" stroke-width="1"/><text transform="translate(254.20 18.40) rotate(-90) scale(1.0 1.18)" text-anchor="end" font-size="9.0" fill="#5E9BCB" >6065.17</text><text transform="translate(308.00 18.40) rotate(-90) scale(1.0 1.18)" text-anchor="end" font-size="9.0" fill="#A6CFEA" >6104.66</text><text transform="translate(403.00 18.40) rotate(-90) scale(1.0 1.18)" text-anchor="end" font-size="9.0" fill="#A6CFEA" >6188.64</text><text transform="translate(457.00 18.40) rotate(-90) scale(1.0 1.18)" text-anchor="end" font-size="9.0" fill="#5E9BCB" >6223.13</text><text transform="translate(41.90 19.00) scale(1.0 1.18)" text-anchor="end" font-size="9.0" fill="#333" letter-spacing="-0.2">197%</text><text transform="translate(41.90 38.64) scale(1.0 1.18)" text-anchor="end" font-size="9.0" fill="#333" letter-spacing="-0.2">172%</text><text transform="translate(41.90 58.28) scale(1.0 1.18)" text-anchor="end" font-size="9.0" fill="#333" letter-spacing="-0.2">148%</text><text transform="translate(41.90 77.92) scale(1.0 1.18)" text-anchor="end" font-size="9.0" fill="#333" letter-spacing="-0.2">123%</text><text transform="translate(41.90 97.56) scale(1.0 1.18)" text-anchor="end" font-size="9.0" fill="#333" letter-spacing="-0.2">98%</text><text transform="translate(41.90 117.20) scale(1.0 1.18)" text-anchor="end" font-size="9.0" fill="#333" letter-spacing="-0.2">74%</text><text transform="translate(41.90 136.84) scale(1.0 1.18)" text-anchor="end" font-size="9.0" fill="#333" letter-spacing="-0.2">49%</text><text transform="translate(41.90 176.12) scale(1.0 1.18)" text-anchor="end" font-size="9.0" fill="#333" letter-spacing="-0.2">0%</text><text transform="translate(41.90 195.76) scale(1.0 1.18)" text-anchor="end" font-size="9.0" fill="#333" letter-spacing="-0.2">-25%</text><text transform="translate(41.90 215.40) scale(1.0 1.18)" text-anchor="end" font-size="9.0" fill="#333" letter-spacing="-0.2">-49%</text><text transform="translate(41.90 235.04) scale(1.0 1.18)" text-anchor="end" font-size="9.0" fill="#333" letter-spacing="-0.2">-74%</text><text transform="translate(41.90 254.68) scale(1.0 1.18)" text-anchor="end" font-size="9.0" fill="#333" letter-spacing="-0.2">-98%</text><text transform="translate(41.90 274.32) scale(1.0 1.18)" text-anchor="end" font-size="9.0" fill="#333" letter-spacing="-0.2">-123%</text><text transform="translate(41.90 293.96) scale(1.0 1.18)" text-anchor="end" font-size="9.0" fill="#333" letter-spacing="-0.2">-148%</text><rect x="5.2000000000000455" y="149" width="38.6" height="11.2" fill="#078A07"/><text transform="translate(41.50 158.60) scale(1.0 1.18)" text-anchor="end" font-size="9.2" fill="#fff" >21%</text><text transform="translate(89.00 303.30) scale(1.0 1.18)" text-anchor="middle" font-size="8.6" fill="#333" >5950</text><text transform="translate(156.54 303.30) scale(1.0 1.18)" text-anchor="middle" font-size="8.6" fill="#333" >6000</text><text transform="translate(224.08 303.30) scale(1.0 1.18)" text-anchor="middle" font-size="8.6" fill="#333" >6050</text><text transform="translate(291.62 303.30) scale(1.0 1.18)" text-anchor="middle" font-size="8.6" fill="#333" >6100</text><text transform="translate(426.70 303.30) scale(1.0 1.18)" text-anchor="middle" font-size="8.6" fill="#333" >6200</text><text transform="translate(89.00 11.30) scale(1.0 1.18)" text-anchor="middle" font-size="8.8" fill="#333" >-3.2%</text><text transform="translate(156.54 11.30) scale(1.0 1.18)" text-anchor="middle" font-size="8.8" fill="#333" >-2.3%</text><text transform="translate(224.08 11.30) scale(1.0 1.18)" text-anchor="middle" font-size="8.8" fill="#333" >-1.5%</text><text transform="translate(291.62 11.30) scale(1.0 1.18)" text-anchor="middle" font-size="8.8" fill="#333" >-0.7%</text><text transform="translate(359.16 11.30) scale(1.0 1.18)" text-anchor="middle" font-size="8.8" fill="#333" >0.0%</text><text transform="translate(426.70 11.30) scale(1.0 1.18)" text-anchor="middle" font-size="8.8" fill="#333" >0.9%</text><line x1="47.60000000000002" x2="471" y1="172.60000000000002" y2="172.60000000000002" stroke="#333" stroke-width="1.1"/><line x1="105.5" x2="105.5" y1="15.400000000000006" y2="290.4" stroke="#8E3CAC" stroke-width="1.3" stroke-dasharray="4 3"/><line x1="215.29999999999995" x2="215.29999999999995" y1="15.400000000000006" y2="290.4" stroke="#8E3CAC" stroke-width="1.3" stroke-dasharray="4 3"/><line x1="324.9" x2="324.9" y1="15.400000000000006" y2="290.4" stroke="#8E3CAC" stroke-width="1.3" stroke-dasharray="4 3"/><text transform="translate(215.20 288.50) rotate(-90) scale(1.0 1.18)" font-size="9.0" fill="#9838A8" >6043.70</text><text transform="translate(324.90 288.50) rotate(-90) scale(1.0 1.18)" font-size="9.0" fill="#9838A8" >6124.88</text><text transform="translate(148.50 282.70) scale(1.0 1.18)" font-size="8.9" fill="#9030A0" >13.0%</text><text transform="translate(257.70 282.70) scale(1.0 1.18)" font-size="8.9" fill="#9030A0" >21.0%</text><text transform="translate(413.00 282.70) scale(1.0 1.18)" font-size="8.9" fill="#9030A0" >40.1%</text><g clip-path="url(#pc)"><path d="M48.0,221.0 C58.5,218.2 88.8,209.9 111.0,204.0 C133.2,198.1 158.2,191.1 181.0,185.4 C203.8,179.6 228.3,175.9 247.7,169.5 C267.2,163.1 282.2,153.5 297.7,147.2 C313.3,140.9 326.8,135.2 341.0,131.5 C355.2,127.9 368.0,125.6 383.0,125.3 C398.0,125.1 416.3,126.8 431.0,130.0 C445.7,133.2 464.3,142.2 471.0,144.7" fill="none" stroke="#EE4A4A" stroke-width="1.1" stroke-opacity="0.8"/><path d="M48.0,225.0 C58.5,222.2 88.8,214.1 111.0,208.0 C133.2,201.9 158.2,194.7 181.0,188.4 C203.8,182.1 228.3,177.0 247.7,170.2 C267.2,163.4 282.2,154.0 297.7,147.6 C313.3,141.2 326.8,135.5 341.0,131.8 C355.2,128.1 368.0,125.8 383.0,125.5 C398.0,125.2 416.3,127.0 431.0,130.2 C445.7,133.4 464.3,142.4 471.0,144.9" fill="none" stroke="#EE4A4A" stroke-width="1.0" stroke-opacity="0.8"/><path d="M48.0,254.7 C58.5,250.2 87.2,237.7 111.0,227.9 C134.8,218.1 168.2,205.2 191.0,196.0 C213.8,186.8 229.9,179.9 247.7,173.0 C265.5,166.1 278.8,160.8 297.7,154.7 C316.6,148.6 343.1,139.8 361.0,136.3 C378.9,132.8 391.7,133.7 405.0,133.6 C418.3,133.6 430.0,134.7 441.0,136.0 C452.0,137.3 466.0,140.4 471.0,141.3" fill="none" stroke="#EE4A4A" stroke-width="1.1" stroke-opacity="0.8"/><path d="M48.0,262.2 C58.5,257.3 86.7,243.9 111.0,233.0 C135.3,222.1 171.2,206.9 194.0,197.0 C216.8,187.1 230.4,180.5 247.7,173.5 C265.0,166.5 278.8,161.2 297.7,155.0 C316.6,148.8 343.1,140.1 361.0,136.6 C378.9,133.1 391.7,133.9 405.0,133.9 C418.3,133.8 430.0,135.0 441.0,136.3 C452.0,137.6 466.0,140.7 471.0,141.6" fill="none" stroke="#EE4A4A" stroke-width="1.0" stroke-opacity="0.8"/><path d="M239.3,179.7 C247.9,177.4 272.4,169.9 291.0,166.0 C309.6,162.1 334.3,158.2 351.0,156.5 C367.7,154.8 377.7,155.1 391.0,155.5 C404.3,155.9 417.7,157.1 431.0,159.0 C444.3,160.9 464.3,165.6 471.0,166.9" fill="none" stroke="#7DA7F0" stroke-width="1.1" stroke-opacity="1"/><path d="M239.0,177.5 C247.7,175.1 272.3,166.6 291.0,163.0 C309.7,159.4 334.3,157.2 351.0,155.8 C367.7,154.4 377.7,154.4 391.0,154.5 C404.3,154.6 417.7,155.4 431.0,156.5 C444.3,157.6 464.3,160.5 471.0,161.3" fill="none" stroke="#3ADF3A" stroke-width="1.5" stroke-opacity="1"/><polyline points="291.79999999999995,165.5 329.29999999999995,158" stroke="#F0A088" stroke-opacity="0.55" stroke-width="6"/><polyline points="48.0,273.6 189.9,174.8 256.8,161.8 291.0,177.0 318.2,148.0 350.5,113.0 389.4,68.0 426.4,23.7 471.0,97.0" fill="none" stroke="#4040C8" stroke-width="1.5" stroke-opacity="1" stroke-linejoin="round"/><polyline points="48.0,208.1 122.2,161.3 191.0,157.7 291.2,208.6 325.4,172.6 377.7,113.0 426.4,55.2 471.0,96.9" fill="none" stroke="#178A17" stroke-width="1.5" stroke-opacity="1" stroke-linejoin="round"/></g><circle cx="351" cy="155.8" r="3.2" fill="#22E0F0" stroke="#206080" stroke-width="0.8"/><rect x="51.200000000000045" y="20.400000000000006" width="140.4" height="140.9" rx="4" fill="#EAF0F8" fill-opacity="0.78" stroke="#8C99AA" stroke-width="1"/><rect x="58.299999999999955" y="28.2" width="2.6" height="9.6" fill="#A8E0A0"/><text transform="translate(61.40 36.30) scale(1.0 1.18)" font-size="9.1" fill="#555" >6,916.00 Realized PnL</text><rect x="58.299999999999955" y="39.9" width="2.6" height="9.6" fill="#44C444"/><text transform="translate(61.20 47.98) scale(1.0 1.18)" font-size="9.1" fill="#555" >-1<tspan fill="#EE5A5A"> 07mar. 6250 Call Δ</tspan></text><text transform="translate(181.50 47.98) scale(1.0 1.18)" text-anchor="end" font-size="9.1" fill="#EE5A5A" >20.59</text><rect x="58.299999999999955" y="51.6" width="2.6" height="9.6" fill="#44C444"/><text transform="translate(61.20 59.66) scale(1.0 1.18)" font-size="9.1" fill="#555" >+1<tspan fill="#5555E6"> 07mar. 6200 Call Δ</tspan></text><text transform="translate(184.80 59.66) scale(1.0 1.18)" text-anchor="end" font-size="9.1" fill="#5555E6" >35.83</text><rect x="58.299999999999955" y="63.2" width="2.6" height="9.6" fill="#44C444"/><text transform="translate(61.20 71.34) scale(1.0 1.18)" font-size="9.1" fill="#555" >+1<tspan fill="#5555E6"> 07mar. 6075 Put Δ</tspan></text><text transform="translate(184.80 71.34) scale(1.0 1.18)" text-anchor="end" font-size="9.1" fill="#5555E6" >-30.98</text><rect x="58.299999999999955" y="74.9" width="2.6" height="9.6" fill="#44C444"/><text transform="translate(61.20 83.02) scale(1.0 1.18)" font-size="9.1" fill="#555" >-1<tspan fill="#EE5A5A"> 07mar. 5975 Put Δ</tspan></text><text transform="translate(181.50 83.02) scale(1.0 1.18)" text-anchor="end" font-size="9.1" fill="#EE5A5A" >-16.63</text><rect x="58.299999999999955" y="86.6" width="2.6" height="9.6" fill="#7CA0F0"/><text transform="translate(61.20 94.70) scale(1.0 1.18)" font-size="9.1" fill="#555" >+2<tspan fill="#5555E6"> 07mar. 6300 Call Δ</tspan></text><text transform="translate(184.80 94.70) scale(1.0 1.18)" text-anchor="end" font-size="9.1" fill="#5555E6" >9.83</text><rect x="58.299999999999955" y="98.3" width="2.6" height="9.6" fill="#7CA0F0"/><text transform="translate(61.20 106.38) scale(1.0 1.18)" font-size="9.1" fill="#555" >+2<tspan fill="#5555E6"> 07mar. 6100 Call Δ</tspan></text><text transform="translate(184.80 106.38) scale(1.0 1.18)" text-anchor="end" font-size="9.1" fill="#5555E6" >66.48</text><rect x="58.299999999999955" y="110.0" width="2.6" height="9.6" fill="#7CA0F0"/><text transform="translate(61.20 118.06) scale(1.0 1.18)" font-size="9.1" fill="#555" >+2<tspan fill="#5555E6"> 28mar. 6000 Put Δ</tspan></text><text transform="translate(184.80 118.06) scale(1.0 1.18)" text-anchor="end" font-size="9.1" fill="#5555E6" >-27.53</text><rect x="58.299999999999955" y="121.6" width="2.6" height="9.6" fill="#7CA0F0"/><text transform="translate(61.20 129.74) scale(1.0 1.18)" font-size="9.1" fill="#555" >-4<tspan fill="#EE5A5A"> 07mar. 6200 Call Δ</tspan></text><text transform="translate(181.50 129.74) scale(1.0 1.18)" text-anchor="end" font-size="9.1" fill="#EE5A5A" >35.83</text><rect x="58.299999999999955" y="133.3" width="2.6" height="9.6" fill="#7CA0F0"/><text transform="translate(61.20 141.42) scale(1.0 1.18)" font-size="9.1" fill="#555" >-1<tspan fill="#EE5A5A"> 07mar. 6025 Put Δ</tspan></text><text transform="translate(181.50 141.42) scale(1.0 1.18)" text-anchor="end" font-size="9.1" fill="#EE5A5A" >-22.73</text><rect x="58.299999999999955" y="145.0" width="2.6" height="9.6" fill="#7CA0F0"/><text transform="translate(61.20 153.10) scale(1.0 1.18)" font-size="9.1" fill="#555" >-1<tspan fill="#EE5A5A"> 07mar. 6075 Put Δ</tspan></text><text transform="translate(181.50 153.10) scale(1.0 1.18)" text-anchor="end" font-size="9.1" fill="#EE5A5A" >-30.98</text><rect x="51.5" y="239" width="92.8" height="47.3" rx="4" fill="#EAF0F8" fill-opacity="0.8" stroke="#8C99AA" stroke-width="1"/><text transform="translate(58.70 254.80) scale(1.0 1.18)" font-size="9.1" fill="#66AA66" >07/03/2025 (0)</text><text transform="translate(58.70 266.40) scale(1.0 1.18)" font-size="9.1" fill="#F08A8A" >28/02/2025 (7) T+8</text><text transform="translate(58.70 278.00) scale(1.0 1.18)" font-size="9.1" fill="#88E088" >20/02/2025 (15) T+0</text><text transform="translate(66.50 282.20) scale(1.0 1.18)" font-size="8.9" fill="#9030A0" >7.4%</text><text transform="translate(105.30 288.50) rotate(-90) scale(1.0 1.18)" font-size="9.0" fill="#C0A0D8" >5962.98</text><rect x="339" y="1" width="24.8" height="9.8" fill="#E6ECF5" stroke="#6D7A8E" stroke-width="1"/><text transform="translate(351.40 9.30) scale(1.0 1.18)" text-anchor="middle" font-size="8.8" fill="#333" >0.0%</text><rect x="3.5" y="309.2" width="480" height="158.2" rx="4" fill="#E8EEF6" stroke="#8C99AA" stroke-width="1"/><text transform="translate(25.50 336.00) scale(1.0 1.18)" text-anchor="middle" font-size="9.2" fill="#666" >PnL</text><text transform="translate(25.50 372.30) scale(1.0 1.18)" text-anchor="middle" font-size="9.2" fill="#666" >Delta</text><text transform="translate(25.50 400.40) scale(1.0 1.18)" text-anchor="middle" font-size="9.2" fill="#666" >Gamma</text><text transform="translate(25.50 428.00) scale(1.0 1.18)" text-anchor="middle" font-size="9.2" fill="#666" >Theta</text><text transform="translate(25.50 455.20) scale(1.0 1.18)" text-anchor="middle" font-size="9.2" fill="#666" >Vega</text><rect x="48.0" y="332.2" width="75.3" height="9.5" fill="#F07878" stroke="#555" stroke-width="0.7"/><rect x="123.3" y="332.2" width="67.6" height="6.0" fill="#F07878" stroke="#555" stroke-width="0.7"/><rect x="190.9" y="332.2" width="67.5" height="1.5" fill="#F07878" stroke="#555" stroke-width="0.7"/><rect x="258.4" y="330.2" width="67.0" height="2.0" fill="#5B7CEC" stroke="#555" stroke-width="0.7"/><rect x="325.4" y="329.2" width="67.1" height="3.0" fill="#5B7CEC" stroke="#555" stroke-width="0.7"/><rect x="392.5" y="329.7" width="67.5" height="2.5" fill="#5B7CEC" stroke="#555" stroke-width="0.7"/><rect x="460.0" y="331.2" width="12.0" height="1.0" fill="#5B7CEC" stroke="#555" stroke-width="0.7"/><line x1="48" x2="471" y1="332.20000000000005" y2="332.20000000000005" stroke="#555" stroke-width="0.9"/><rect x="48.0" y="360.6" width="75.3" height="8.3" fill="#5B7CEC" stroke="#555" stroke-width="0.7"/><rect x="123.3" y="359.7" width="67.6" height="9.2" fill="#5B7CEC" stroke="#555" stroke-width="0.7"/><rect x="190.9" y="360.6" width="67.5" height="8.3" fill="#5B7CEC" stroke="#555" stroke-width="0.7"/><rect x="258.4" y="362.9" width="67.0" height="6.0" fill="#5B7CEC" stroke="#555" stroke-width="0.7"/><rect x="325.4" y="367.4" width="67.1" height="1.5" fill="#5B7CEC" stroke="#555" stroke-width="0.7"/><rect x="392.5" y="368.9" width="67.5" height="3.0" fill="#F07878" stroke="#555" stroke-width="0.7"/><rect x="460.0" y="368.9" width="12.0" height="6.0" fill="#F07878" stroke="#555" stroke-width="0.7"/><line x1="48" x2="471" y1="368.9" y2="368.9" stroke="#555" stroke-width="0.9"/><rect x="48.0" y="394.7" width="75.3" height="1.5" fill="#5B7CEC" stroke="#555" stroke-width="0.7"/><rect x="123.3" y="395.6" width="67.6" height="0.6" fill="#5B7CEC" stroke="#555" stroke-width="0.7"/><rect x="190.9" y="396.2" width="67.5" height="2.6" fill="#F07878" stroke="#555" stroke-width="0.7"/><rect x="258.4" y="396.2" width="67.0" height="6.0" fill="#F07878" stroke="#555" stroke-width="0.7"/><rect x="325.4" y="396.2" width="67.1" height="8.0" fill="#F07878" stroke="#555" stroke-width="0.7"/><rect x="392.5" y="396.2" width="67.5" height="9.0" fill="#F07878" stroke="#555" stroke-width="0.7"/><rect x="460.0" y="396.2" width="12.0" height="5.0" fill="#F07878" stroke="#555" stroke-width="0.7"/><line x1="48" x2="471" y1="396.20000000000005" y2="396.20000000000005" stroke="#555" stroke-width="0.9"/><rect x="48.0" y="424.2" width="75.3" height="0.8" fill="#F07878" stroke="#555" stroke-width="0.7"/><rect x="123.3" y="423.6" width="67.6" height="0.6" fill="#5B7CEC" stroke="#555" stroke-width="0.7"/><rect x="190.9" y="421.8" width="67.5" height="2.4" fill="#5B7CEC" stroke="#555" stroke-width="0.7"/><rect x="258.4" y="418.7" width="67.0" height="5.5" fill="#5B7CEC" stroke="#555" stroke-width="0.7"/><rect x="325.4" y="416.7" width="67.1" height="7.5" fill="#5B7CEC" stroke="#555" stroke-width="0.7"/><rect x="392.5" y="414.7" width="67.5" height="9.5" fill="#5B7CEC" stroke="#555" stroke-width="0.7"/><rect x="460.0" y="418.2" width="12.0" height="6.0" fill="#5B7CEC" stroke="#555" stroke-width="0.7"/><line x1="48" x2="471" y1="424.20000000000005" y2="424.20000000000005" stroke="#555" stroke-width="0.9"/><rect x="48.0" y="442.7" width="75.3" height="9.2" fill="#5B7CEC" stroke="#555" stroke-width="0.7"/><rect x="123.3" y="443.6" width="67.6" height="8.3" fill="#5B7CEC" stroke="#555" stroke-width="0.7"/><rect x="190.9" y="444.9" width="67.5" height="7.0" fill="#5B7CEC" stroke="#555" stroke-width="0.7"/><rect x="258.4" y="448.9" width="67.0" height="3.0" fill="#5B7CEC" stroke="#555" stroke-width="0.7"/><rect x="325.4" y="450.7" width="67.1" height="1.2" fill="#5B7CEC" stroke="#555" stroke-width="0.7"/><rect x="392.5" y="451.3" width="67.5" height="0.6" fill="#5B7CEC" stroke="#555" stroke-width="0.7"/><rect x="460.0" y="449.9" width="12.0" height="2.0" fill="#5B7CEC" stroke="#555" stroke-width="0.7"/><line x1="48" x2="471" y1="451.9" y2="451.9" stroke="#555" stroke-width="0.9"/><text transform="translate(89.60 321.80) scale(1.0 1.18)" text-anchor="middle" font-size="9.0" fill="#EE6A6A" >-54%</text><text transform="translate(89.60 331.70) scale(1.0 1.18)" text-anchor="middle" font-size="9.0" fill="#EE6A6A" >-4373</text><text transform="translate(157.10 321.80) scale(1.0 1.18)" text-anchor="middle" font-size="9.0" fill="#EE6A6A" >-32%</text><text transform="translate(157.10 331.70) scale(1.0 1.18)" text-anchor="middle" font-size="9.0" fill="#EE6A6A" >-2587</text><text transform="translate(224.60 321.80) scale(1.0 1.18)" text-anchor="middle" font-size="9.0" fill="#EE6A6A" >-9%</text><text transform="translate(224.60 331.70) scale(1.0 1.18)" text-anchor="middle" font-size="9.0" fill="#EE6A6A" >-731</text><text transform="translate(291.90 341.30) scale(1.0 1.18)" text-anchor="middle" font-size="9.0" fill="#6A72E8" >879</text><text transform="translate(291.90 349.00) scale(1.0 1.18)" text-anchor="middle" font-size="9.0" fill="#6A72E8" >11%</text><text transform="translate(426.20 341.30) scale(1.0 1.18)" text-anchor="middle" font-size="9.0" fill="#6A72E8" >1724</text><text transform="translate(426.20 349.00) scale(1.0 1.18)" text-anchor="middle" font-size="9.0" fill="#6A72E8" >21%</text><text transform="translate(89.60 377.90) scale(1.0 1.18)" text-anchor="middle" font-size="9.0" fill="#6A72E8" >34.00</text><text transform="translate(157.10 377.90) scale(1.0 1.18)" text-anchor="middle" font-size="9.0" fill="#6A72E8" >37.12</text><text transform="translate(224.60 377.90) scale(1.0 1.18)" text-anchor="middle" font-size="9.0" fill="#6A72E8" >36.03</text><text transform="translate(291.90 377.90) scale(1.0 1.18)" text-anchor="middle" font-size="9.0" fill="#6A72E8" >26.79</text><text transform="translate(426.20 368.50) scale(1.0 1.18)" text-anchor="middle" font-size="9.0" fill="#EE6A6A" >-12.10</text><text transform="translate(89.60 405.20) scale(1.0 1.18)" text-anchor="middle" font-size="9.0" fill="#6A72E8" >0.08</text><text transform="translate(157.10 405.20) scale(1.0 1.18)" text-anchor="middle" font-size="9.0" fill="#6A72E8" >0.04</text><text transform="translate(224.60 395.70) scale(1.0 1.18)" text-anchor="middle" font-size="9.0" fill="#EE6A6A" >-0.09</text><text transform="translate(291.90 395.70) scale(1.0 1.18)" text-anchor="middle" font-size="9.0" fill="#EE6A6A" >-0.28</text><text transform="translate(426.20 395.70) scale(1.0 1.18)" text-anchor="middle" font-size="9.0" fill="#EE6A6A" >-0.40</text><text transform="translate(89.60 423.70) scale(1.0 1.18)" text-anchor="middle" font-size="9.0" fill="#EE6A6A" >-0.81</text><text transform="translate(157.10 433.20) scale(1.0 1.18)" text-anchor="middle" font-size="9.0" fill="#6A72E8" >3.41</text><text transform="translate(224.60 433.20) scale(1.0 1.18)" text-anchor="middle" font-size="9.0" fill="#6A72E8" >42.53</text><text transform="translate(291.90 433.20) scale(1.0 1.18)" text-anchor="middle" font-size="9.0" fill="#6A72E8" >114.83</text><text transform="translate(426.20 433.20) scale(1.0 1.18)" text-anchor="middle" font-size="9.0" fill="#6A72E8" >191.31</text><text transform="translate(89.60 460.90) scale(1.0 1.18)" text-anchor="middle" font-size="9.0" fill="#6A72E8" >917.52</text><text transform="translate(157.10 460.90) scale(1.0 1.18)" text-anchor="middle" font-size="9.0" fill="#6A72E8" >882.60</text><text transform="translate(224.60 460.90) scale(1.0 1.18)" text-anchor="middle" font-size="9.0" fill="#6A72E8" >700.33</text><text transform="translate(291.90 460.90) scale(1.0 1.18)" text-anchor="middle" font-size="9.0" fill="#6A72E8" >403.46</text><text transform="translate(426.20 460.90) scale(1.0 1.18)" text-anchor="middle" font-size="9.0" fill="#6A72E8" >55.51</text><text transform="translate(359.00 341.30) scale(1.0 1.18)" text-anchor="middle" font-size="9.0" fill="#B8C0E8" >1903</text><text transform="translate(359.00 349.00) scale(1.0 1.18)" text-anchor="middle" font-size="9.0" fill="#B8C0E8" >22%</text><text transform="translate(359.00 377.90) scale(1.0 1.18)" text-anchor="middle" font-size="9.0" fill="#B8C0E8" >9.04</text><text transform="translate(359.00 395.70) scale(1.0 1.18)" text-anchor="middle" font-size="9.0" fill="#B8C0E8" >-0.41</text><text transform="translate(359.00 433.20) scale(1.0 1.18)" text-anchor="middle" font-size="9.0" fill="#B8C0E8" >161.00</text><text transform="translate(359.00 460.90) scale(1.0 1.18)" text-anchor="middle" font-size="9.0" fill="#B8C0E8" >136.23</text><rect x="329.4" y="294.7" width="43.2" height="172.6" rx="4" fill="#E6ECF5" fill-opacity="0.78" stroke="#6F7C8E" stroke-width="1"/><line x1="329.4" x2="372.6" y1="309.2" y2="309.2" stroke="#8C99AA" stroke-width="1"/><text transform="translate(351.00 303.80) scale(1.0 1.18)" text-anchor="middle" font-size="9.0" fill="#222" >6144.15</text><text transform="translate(351.00 332.00) scale(1.0 1.18)" text-anchor="middle" font-size="9.2" fill="#3434DC" >1,743</text><text transform="translate(351.00 345.80) scale(1.0 1.18)" text-anchor="middle" font-size="9.2" fill="#3434DC" >21.4%</text><text transform="translate(351.00 372.50) scale(1.0 1.18)" text-anchor="middle" font-size="9.2" fill="#3434DC" >11.43</text><text transform="translate(351.00 400.50) scale(1.0 1.18)" text-anchor="middle" font-size="9.2" fill="#EE2A2A" >-0.40</text><text transform="translate(351.00 427.80) scale(1.0 1.18)" text-anchor="middle" font-size="9.2" fill="#3434DC" >175.35</text><text transform="translate(351.00 455.80) scale(1.0 1.18)" text-anchor="middle" font-size="9.2" fill="#3434DC" >160.17</text></svg>
</body></html>
